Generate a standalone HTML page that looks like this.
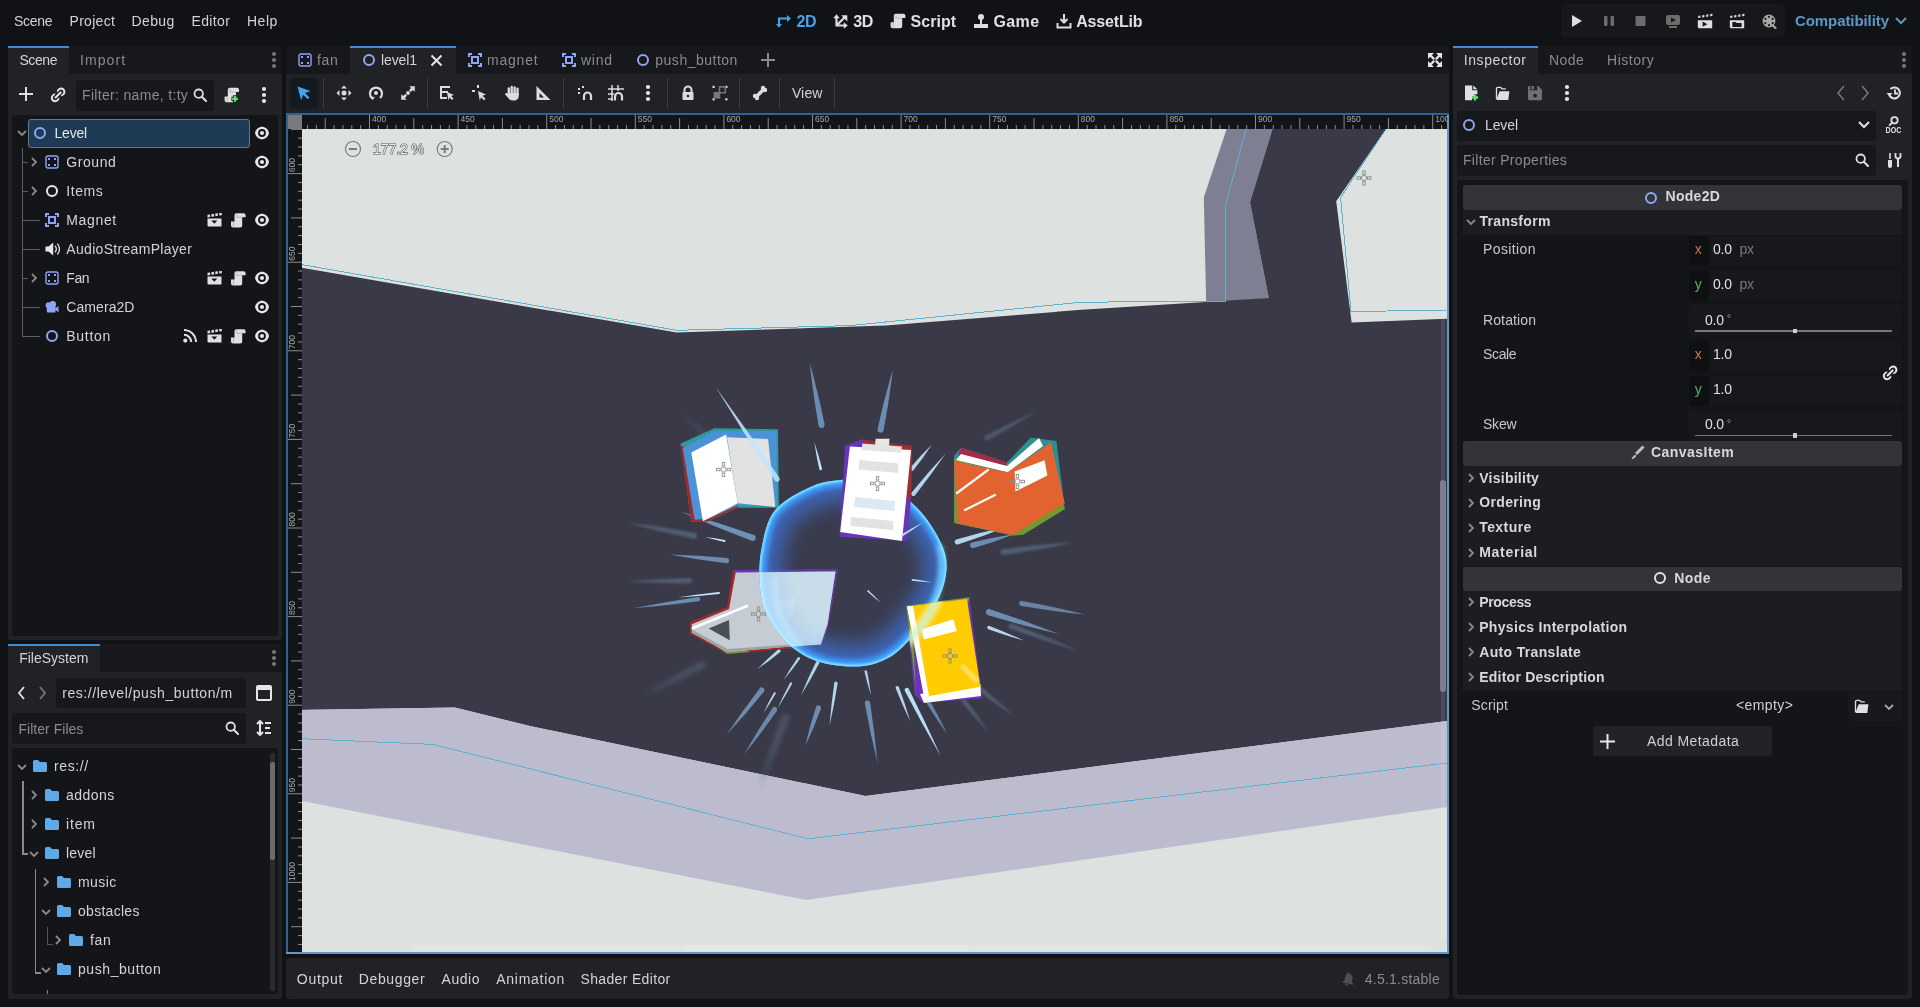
<!DOCTYPE html>
<html><head><meta charset="utf-8"><style>
html,body{margin:0;padding:0;width:1920px;height:1007px;overflow:hidden;background:#111215;font-family:"Liberation Sans", sans-serif;}
svg{display:block}
</style></head><body><div style="position:absolute;left:0;top:0;width:1920px;height:1007px;will-change:transform;">
<div style="position:absolute;left:14px;top:14.33px;font-size:14px;line-height:15.64px;font-weight:400;color:#d4d4d6;letter-spacing:-0.273px;white-space:pre;">Scene</div>
<div style="position:absolute;left:69.5px;top:14.33px;font-size:14px;line-height:15.64px;font-weight:400;color:#d4d4d6;letter-spacing:0.300px;white-space:pre;">Project</div>
<div style="position:absolute;left:131.5px;top:14.33px;font-size:14px;line-height:15.64px;font-weight:400;color:#d4d4d6;letter-spacing:0.394px;white-space:pre;">Debug</div>
<div style="position:absolute;left:191.5px;top:14.33px;font-size:14px;line-height:15.64px;font-weight:400;color:#d4d4d6;letter-spacing:0.356px;white-space:pre;">Editor</div>
<div style="position:absolute;left:247px;top:14.33px;font-size:14px;line-height:15.64px;font-weight:400;color:#d4d4d6;letter-spacing:0.501px;white-space:pre;">Help</div>
<svg style="position:absolute;left:776px;top:13px;" width="16" height="16" viewBox="0 0 16 16"><path d="M3 14V5.5h9" fill="none" stroke="#42a3f2" stroke-width="2"/><path d="M11 2l4 3.5-4 3.5z" fill="#42a3f2"/><path d="M0 11l3 3.5 3-3.5z" fill="#42a3f2"/></svg>
<div style="position:absolute;left:796.6px;top:12.52px;font-size:16px;line-height:17.87px;font-weight:700;color:#42a3f2;letter-spacing:-0.467px;white-space:pre;">2D</div>
<svg style="position:absolute;left:833px;top:13px;" width="16" height="16" viewBox="0 0 16 16"><path d="M3.5 4.5V12.5H11.5M3.5 12.5L11.5 4.5" fill="none" stroke="#dedede" stroke-width="2.2"/><path d="M0.2 5.2L3.5 1.2 6.8 5.2z" fill="#dedede"/><path d="M10.8 9.2L14.8 12.5 10.8 15.8z" fill="#dedede"/><path d="M8.2 2.3H14.3V8.4z" fill="#dedede"/></svg>
<div style="position:absolute;left:853.3px;top:12.52px;font-size:16px;line-height:17.87px;font-weight:700;color:#e0e0e0;letter-spacing:-0.467px;white-space:pre;">3D</div>
<svg style="position:absolute;left:890px;top:13px;" width="16" height="16" viewBox="0 0 16 16"><path d="M5.8 0.8H13.4A2 2 0 0 1 15.4 2.8V5H12.2V13.2A2 2 0 0 1 10.2 15.2H2.6A2 2 0 0 1 0.6 13.2V9.2H3.8V2.8A2 2 0 0 1 5.8 0.8Z" fill="#dedede"/><path d="M5.9 2.2V5H12" fill="none" stroke="#a8a8a8" stroke-width="0.8"/><path d="M3.2 9.8V14.4" stroke="#a8a8a8" stroke-width="0.8"/></svg>
<div style="position:absolute;left:910.6px;top:12.52px;font-size:16px;line-height:17.87px;font-weight:700;color:#e0e0e0;letter-spacing:0.010px;white-space:pre;">Script</div>
<svg style="position:absolute;left:973px;top:13px;" width="16" height="16" viewBox="0 0 16 16"><circle cx="8" cy="4" r="3" fill="#dedede"/><rect x="7" y="6" width="2" height="5" fill="#dedede"/><rect x="1" y="11" width="14" height="4" fill="#dedede"/></svg>
<div style="position:absolute;left:993.6px;top:12.52px;font-size:16px;line-height:17.87px;font-weight:700;color:#e0e0e0;letter-spacing:0.333px;white-space:pre;">Game</div>
<svg style="position:absolute;left:1056px;top:13px;" width="16" height="16" viewBox="0 0 16 16"><path d="M8 1v8M4.5 6l3.5 3.5L11.5 6M1.5 10v4.5h13V10" fill="none" stroke="#dedede" stroke-width="2"/></svg>
<div style="position:absolute;left:1076.2px;top:12.52px;font-size:16px;line-height:17.87px;font-weight:700;color:#e0e0e0;letter-spacing:-0.159px;white-space:pre;">AssetLib</div>
<div style="position:absolute;left:1561px;top:4px;width:224px;height:33px;background:#17181c;border-radius:4px;"></div>
<svg style="position:absolute;left:1568px;top:13px;" width="16" height="16" viewBox="0 0 16 16"><path d="M4 2l10 6-10 6z" fill="#dedede"/></svg>
<svg style="position:absolute;left:1601px;top:13px;" width="16" height="16" viewBox="0 0 16 16"><rect x="3" y="3" width="3.5" height="10" rx="1" fill="#6c6c6c"/><rect x="9.5" y="3" width="3.5" height="10" rx="1" fill="#6c6c6c"/></svg>
<svg style="position:absolute;left:1633px;top:13px;" width="16" height="16" viewBox="0 0 16 16"><rect x="2.5" y="3" width="10" height="10" rx="1" fill="#6c6c6c"/></svg>
<svg style="position:absolute;left:1665px;top:13px;" width="16" height="16" viewBox="0 0 16 16"><rect x="1" y="2" width="14" height="10" rx="2" fill="#6c6c6c"/><path d="M6 4.5l5 2.5-5 2.5z" fill="#17181c"/><rect x="4" y="13" width="8" height="2" fill="#6c6c6c"/></svg>
<svg style="position:absolute;left:1697px;top:13px;" width="16" height="16" viewBox="0 0 16 16"><path d="M1.2 2.9l2.2-0.35v2.2l-2.2 0.35zM5.2 2.3l2.2-0.35v2.2l-2.2 0.35zM9.2 1.7l2.2-0.35v2.2l-2.2 0.35zM13.2 1.1l2.2-0.35v2.2l-2.2 0.35z" fill="#dedede"/><path d="M0.8 7.2H15.2V15.2H2.3A1.5 1.5 0 0 1 0.8 13.7z" fill="#dedede"/><path d="M5.6 8.6L10.4 11.2L5.6 13.8z" fill="#17181c"/></svg>
<svg style="position:absolute;left:1729px;top:13px;" width="16" height="16" viewBox="0 0 16 16"><path d="M1.2 2.9l2.2-0.35v2.2l-2.2 0.35zM5.2 2.3l2.2-0.35v2.2l-2.2 0.35zM9.2 1.7l2.2-0.35v2.2l-2.2 0.35zM13.2 1.1l2.2-0.35v2.2l-2.2 0.35z" fill="#dedede"/><path d="M0.8 7.2H15.2V15.2H2.3A1.5 1.5 0 0 1 0.8 13.7z" fill="#dedede"/><path d="M3.4 8.9H6.6L7.6 9.9H12.6V13.9H3.4z" fill="#17181c"/></svg>
<svg style="position:absolute;left:1761px;top:13px;" width="16" height="16" viewBox="0 0 16 16"><circle cx="8" cy="8" r="6.4" fill="#a8a8a8"/><circle cx="8.00" cy="3.80" r="1.1" fill="#17181c"/><circle cx="11.64" cy="5.90" r="1.1" fill="#17181c"/><circle cx="11.64" cy="10.10" r="1.1" fill="#17181c"/><circle cx="8.00" cy="12.20" r="1.1" fill="#17181c"/><circle cx="4.36" cy="10.10" r="1.1" fill="#17181c"/><circle cx="4.36" cy="5.90" r="1.1" fill="#17181c"/><path d="M12 12.5L14.6 15.3" stroke="#a8a8a8" stroke-width="2" stroke-linecap="round"/></svg>
<div style="position:absolute;left:1795px;top:12.92px;font-size:15px;line-height:16.75px;font-weight:700;color:#5a98c4;letter-spacing:-0.082px;white-space:pre;">Compatibility</div>
<svg style="position:absolute;left:1894px;top:15px;" width="14" height="12" viewBox="0 0 14 12"><path d="M2 3l5 5 5-5" fill="none" stroke="#5a98c4" stroke-width="2"/></svg>
<div style="position:absolute;left:8px;top:46px;width:274px;height:594px;background:#17181c;border-radius:3px;"></div>
<div style="position:absolute;left:8px;top:74px;width:274px;height:566px;background:#212226;border-radius:0px;border-radius:0 0 3px 3px;"></div>
<div style="position:absolute;left:8px;top:46px;width:61px;height:28px;background:#212226;border-radius:0px;border-radius:3px 3px 0 0;"></div>
<div style="position:absolute;left:8px;top:46px;width:61px;height:2px;background:#3d8fd9;border-radius:0px;"></div>
<div style="position:absolute;left:19.4px;top:53.33px;font-size:14px;line-height:15.64px;font-weight:400;color:#d4d4d6;letter-spacing:-0.410px;white-space:pre;">Scene</div>
<div style="position:absolute;left:80px;top:53.33px;font-size:14px;line-height:15.64px;font-weight:400;color:#8b8b8f;letter-spacing:1.076px;white-space:pre;">Import</div>
<svg style="position:absolute;left:271px;top:51px;" width="6" height="18" viewBox="0 0 6 18"><circle cx="3" cy="3" r="2.1" fill="#777"/><circle cx="3" cy="9" r="2.1" fill="#777"/><circle cx="3" cy="15" r="2.1" fill="#777"/></svg>
<svg style="position:absolute;left:19px;top:87px;" width="14" height="14" viewBox="0 0 14 14"><path d="M7 0v14M0 7h14" stroke="#dedede" stroke-width="2"/></svg>
<svg style="position:absolute;left:46px;top:84px;" width="22" height="20" viewBox="0 0 22 20"><path d="M12.39 13.61A3.3 3.3 0 1 1 9.39 10.61M11.81 8.19A3.3 3.3 0 1 1 14.81 11.19" fill="none" stroke="#e6e6e6" stroke-width="2"/><path d="M9.6 13.4L14.6 8.4" stroke="#212226" stroke-width="4.6" stroke-linecap="round"/><path d="M9.6 13.4L14.6 8.4" stroke="#e6e6e6" stroke-width="2.1" stroke-linecap="round"/></svg>
<div style="position:absolute;left:76px;top:80px;width:137.5px;height:30.5px;background:#17181b;border-radius:3px;"></div>
<div style="position:absolute;left:82px;top:88.33px;font-size:14px;line-height:15.64px;font-weight:400;color:#8b8b8f;letter-spacing:0.324px;white-space:pre;">Filter: name, t:ty</div>
<svg style="position:absolute;left:193px;top:88px;" width="15" height="15" viewBox="0 0 15 15"><circle cx="5.7" cy="5.7" r="4.2" fill="none" stroke="#dedede" stroke-width="1.8"/><path d="M8.8 8.8L13 13" stroke="#dedede" stroke-width="2.1" stroke-linecap="round"/></svg>
<svg style="position:absolute;left:224px;top:87px;" width="16" height="16" viewBox="0 0 16 16"><path d="M5.8 0.8H13A2 2 0 0 1 15 2.8V5H12V13.2A2 2 0 0 1 10 15.2H2.6A2 2 0 0 1 0.6 13.2V9.6H3.8V2.8A2 2 0 0 1 5.8 0.8Z" fill="#e0e0e0"/><path d="M5.9 2.2V5H12" fill="none" stroke="#a8a8a8" stroke-width="0.8"/><path d="M3.2 10.2V14.4" stroke="#a8a8a8" stroke-width="0.8"/><path d="M11 8.2v7.2M7.4 11.8h7.2" stroke="#212226" stroke-width="4.2"/><path d="M11 9v5.8M8.1 11.9h5.8" stroke="#5fe070" stroke-width="2.2"/></svg>
<svg style="position:absolute;left:261px;top:86px;" width="6" height="18" viewBox="0 0 6 18"><circle cx="3" cy="3" r="2.1" fill="#e6e6e6"/><circle cx="3" cy="9" r="2.1" fill="#e6e6e6"/><circle cx="3" cy="15" r="2.1" fill="#e6e6e6"/></svg>
<div style="position:absolute;left:12px;top:115px;width:266px;height:521px;background:#141518;border-radius:3px;"></div>
<div style="position:absolute;left:28px;top:119px;width:221.5px;height:28.5px;background:#1f3a55;border-radius:3px;box-sizing:border-box;border:1px solid #6d7684;"></div>
<div style="position:absolute;left:21.5px;top:148px;width:1px;height:188px;background:#5e5e62;border-radius:0px;"></div>
<svg style="position:absolute;left:17px;top:129px;" width="10" height="8" viewBox="0 0 10 8"><path d="M1 2l4 4 4-4" fill="none" stroke="#8a8a8a" stroke-width="1.8"/></svg>
<svg style="position:absolute;left:33px;top:126px;" width="14" height="14" viewBox="0 0 14 14"><circle cx="7" cy="7" r="5" fill="none" stroke="#8da5f3" stroke-width="2"/></svg>
<div style="position:absolute;left:54.5px;top:126.33px;font-size:14px;line-height:15.64px;font-weight:400;color:#e6e6e6;letter-spacing:-0.220px;white-space:pre;">Level</div>
<svg style="position:absolute;left:254px;top:126px;" width="16" height="14" viewBox="0 0 16 14"><path d="M1 7C2.8 -1.3 13.2 -1.3 15 7C13.2 15.3 2.8 15.3 1 7z" fill="#e6e6e6"/><circle cx="8" cy="7" r="3.9" fill="#141518"/><circle cx="8" cy="7" r="2.1" fill="#e6e6e6"/></svg>
<div style="position:absolute;left:22px;top:162px;width:6px;height:1px;background:#5e5e62;border-radius:0px;"></div>
<svg style="position:absolute;left:30px;top:157px;" width="8" height="10" viewBox="0 0 8 10"><path d="M2 1l4 4-4 4" fill="none" stroke="#8a8a8a" stroke-width="1.8"/></svg>
<svg style="position:absolute;left:45px;top:155px;" width="14" height="14" viewBox="0 0 14 14"><rect x="1" y="1" width="12" height="12" rx="2" fill="none" stroke="#8da5f3" stroke-width="1.4"/><rect x="3" y="3" width="2" height="2" fill="#8da5f3"/><rect x="9" y="3" width="2" height="2" fill="#8da5f3"/><rect x="3" y="9" width="2" height="2" fill="#8da5f3"/><rect x="9" y="9" width="2" height="2" fill="#8da5f3"/></svg>
<div style="position:absolute;left:66.3px;top:155.33px;font-size:14px;line-height:15.64px;font-weight:400;color:#d4d4d6;letter-spacing:0.555px;white-space:pre;">Ground</div>
<svg style="position:absolute;left:254px;top:155px;" width="16" height="14" viewBox="0 0 16 14"><path d="M1 7C2.8 -1.3 13.2 -1.3 15 7C13.2 15.3 2.8 15.3 1 7z" fill="#e6e6e6"/><circle cx="8" cy="7" r="3.9" fill="#141518"/><circle cx="8" cy="7" r="2.1" fill="#e6e6e6"/></svg>
<div style="position:absolute;left:22px;top:191px;width:6px;height:1px;background:#5e5e62;border-radius:0px;"></div>
<svg style="position:absolute;left:30px;top:186px;" width="8" height="10" viewBox="0 0 8 10"><path d="M2 1l4 4-4 4" fill="none" stroke="#8a8a8a" stroke-width="1.8"/></svg>
<svg style="position:absolute;left:45px;top:184px;" width="14" height="14" viewBox="0 0 14 14"><circle cx="7" cy="7" r="5" fill="none" stroke="#e6e6e6" stroke-width="2"/></svg>
<div style="position:absolute;left:66.3px;top:184.33px;font-size:14px;line-height:15.64px;font-weight:400;color:#d4d4d6;letter-spacing:0.560px;white-space:pre;">Items</div>
<div style="position:absolute;left:22px;top:220px;width:18px;height:1px;background:#5e5e62;border-radius:0px;"></div>
<svg style="position:absolute;left:45px;top:213px;" width="14" height="14" viewBox="0 0 14 14"><path d="M1 4V1h3M10 1h3v3M13 10v3h-3M4 13H1v-3" fill="none" stroke="#8da5f3" stroke-width="2"/><rect x="4" y="4" width="6" height="6" fill="none" stroke="#8da5f3" stroke-width="2"/></svg>
<div style="position:absolute;left:66.3px;top:213.33px;font-size:14px;line-height:15.64px;font-weight:400;color:#d4d4d6;letter-spacing:0.648px;white-space:pre;">Magnet</div>
<svg style="position:absolute;left:207px;top:213px;" width="15" height="14" viewBox="0 0 15 14"><path d="M0.5 1.8l2.6-0.4v2.6l-2.6 0.4zM4.4 1.2l2.6-0.4v2.6l-2.6 0.4zM8.3 0.6l2.6-0.4v2.6l-2.6 0.4zM12.2 0l2.6-0.4v2.6l-2.6 0.4z" fill="#e0e0e0"/><path d="M0.5 5.5h14v8h-13a1 1 0 0 1-1-1z" fill="#e0e0e0"/><path d="M4.3 7.6h6L7.3 10.8z" fill="#141518"/></svg>
<svg style="position:absolute;left:231px;top:213px;" width="15" height="15" viewBox="0 0 15 15"><path d="M5.6 0.2H12.6A2 2 0 0 1 14.6 2.2V4.3H11.2V12.4A2 2 0 0 1 9.2 14.4H2A2 2 0 0 1 0 12.4V8.6H3.5V2.3A2 2 0 0 1 5.6 0.2Z" fill="#e0e0e0"/><path d="M5.7 1.5V4.3H11" fill="none" stroke="#a8a8a8" stroke-width="0.8"/><path d="M2.5 9.2V13.6" stroke="#a8a8a8" stroke-width="0.8"/></svg>
<svg style="position:absolute;left:254px;top:213px;" width="16" height="14" viewBox="0 0 16 14"><path d="M1 7C2.8 -1.3 13.2 -1.3 15 7C13.2 15.3 2.8 15.3 1 7z" fill="#e6e6e6"/><circle cx="8" cy="7" r="3.9" fill="#141518"/><circle cx="8" cy="7" r="2.1" fill="#e6e6e6"/></svg>
<div style="position:absolute;left:22px;top:249px;width:18px;height:1px;background:#5e5e62;border-radius:0px;"></div>
<svg style="position:absolute;left:45px;top:242px;" width="15" height="14" viewBox="0 0 15 14"><path d="M0.5 4.5h3l4.7-4v13l-4.7-4h-3z" fill="#e6e6e6"/><path d="M10 3.8a4.5 4.5 0 0 1 0 6.4M12.2 1.6a7.6 7.6 0 0 1 0 10.8" fill="none" stroke="#e6e6e6" stroke-width="1.3"/></svg>
<div style="position:absolute;left:66.3px;top:242.33px;font-size:14px;line-height:15.64px;font-weight:400;color:#d4d4d6;letter-spacing:0.309px;white-space:pre;">AudioStreamPlayer</div>
<div style="position:absolute;left:22px;top:278px;width:6px;height:1px;background:#5e5e62;border-radius:0px;"></div>
<svg style="position:absolute;left:30px;top:273px;" width="8" height="10" viewBox="0 0 8 10"><path d="M2 1l4 4-4 4" fill="none" stroke="#8a8a8a" stroke-width="1.8"/></svg>
<svg style="position:absolute;left:45px;top:271px;" width="14" height="14" viewBox="0 0 14 14"><rect x="1" y="1" width="12" height="12" rx="2" fill="none" stroke="#8da5f3" stroke-width="1.4"/><rect x="3" y="3" width="2" height="2" fill="#8da5f3"/><rect x="9" y="3" width="2" height="2" fill="#8da5f3"/><rect x="3" y="9" width="2" height="2" fill="#8da5f3"/><rect x="9" y="9" width="2" height="2" fill="#8da5f3"/></svg>
<div style="position:absolute;left:66.3px;top:271.33px;font-size:14px;line-height:15.64px;font-weight:400;color:#d4d4d6;letter-spacing:-0.385px;white-space:pre;">Fan</div>
<svg style="position:absolute;left:207px;top:271px;" width="15" height="14" viewBox="0 0 15 14"><path d="M0.5 1.8l2.6-0.4v2.6l-2.6 0.4zM4.4 1.2l2.6-0.4v2.6l-2.6 0.4zM8.3 0.6l2.6-0.4v2.6l-2.6 0.4zM12.2 0l2.6-0.4v2.6l-2.6 0.4z" fill="#e0e0e0"/><path d="M0.5 5.5h14v8h-13a1 1 0 0 1-1-1z" fill="#e0e0e0"/><path d="M4.3 7.6h6L7.3 10.8z" fill="#141518"/></svg>
<svg style="position:absolute;left:231px;top:271px;" width="15" height="15" viewBox="0 0 15 15"><path d="M5.6 0.2H12.6A2 2 0 0 1 14.6 2.2V4.3H11.2V12.4A2 2 0 0 1 9.2 14.4H2A2 2 0 0 1 0 12.4V8.6H3.5V2.3A2 2 0 0 1 5.6 0.2Z" fill="#e0e0e0"/><path d="M5.7 1.5V4.3H11" fill="none" stroke="#a8a8a8" stroke-width="0.8"/><path d="M2.5 9.2V13.6" stroke="#a8a8a8" stroke-width="0.8"/></svg>
<svg style="position:absolute;left:254px;top:271px;" width="16" height="14" viewBox="0 0 16 14"><path d="M1 7C2.8 -1.3 13.2 -1.3 15 7C13.2 15.3 2.8 15.3 1 7z" fill="#e6e6e6"/><circle cx="8" cy="7" r="3.9" fill="#141518"/><circle cx="8" cy="7" r="2.1" fill="#e6e6e6"/></svg>
<div style="position:absolute;left:22px;top:307px;width:18px;height:1px;background:#5e5e62;border-radius:0px;"></div>
<svg style="position:absolute;left:45px;top:301px;" width="14" height="12" viewBox="0 0 14 12"><circle cx="3.6" cy="4.2" r="3" fill="#8da5f3"/><circle cx="7.8" cy="3.3" r="3.2" fill="#8da5f3"/><path d="M1.8 5h8.7v6.5H3a1.2 1.2 0 0 1-1.2-1.2z" fill="#8da5f3"/><path d="M9.5 8l4-3v6.6z" fill="#8da5f3"/></svg>
<div style="position:absolute;left:66.3px;top:300.33px;font-size:14px;line-height:15.64px;font-weight:400;color:#d4d4d6;letter-spacing:0.067px;white-space:pre;">Camera2D</div>
<svg style="position:absolute;left:254px;top:300px;" width="16" height="14" viewBox="0 0 16 14"><path d="M1 7C2.8 -1.3 13.2 -1.3 15 7C13.2 15.3 2.8 15.3 1 7z" fill="#e6e6e6"/><circle cx="8" cy="7" r="3.9" fill="#141518"/><circle cx="8" cy="7" r="2.1" fill="#e6e6e6"/></svg>
<div style="position:absolute;left:22px;top:336px;width:18px;height:1px;background:#5e5e62;border-radius:0px;"></div>
<svg style="position:absolute;left:45px;top:329px;" width="14" height="14" viewBox="0 0 14 14"><circle cx="7" cy="7" r="5" fill="none" stroke="#8da5f3" stroke-width="2"/></svg>
<div style="position:absolute;left:66.3px;top:329.33px;font-size:14px;line-height:15.64px;font-weight:400;color:#d4d4d6;letter-spacing:0.707px;white-space:pre;">Button</div>
<svg style="position:absolute;left:182.5px;top:329px;" width="14" height="14" viewBox="0 0 14 14"><circle cx="2.3" cy="11.6" r="2.1" fill="#e0e0e0"/><path d="M1 5.8a7.2 7.2 0 0 1 7.2 7.2M1 1a12 12 0 0 1 12 12" fill="none" stroke="#e0e0e0" stroke-width="2.1"/></svg>
<svg style="position:absolute;left:207px;top:329px;" width="15" height="14" viewBox="0 0 15 14"><path d="M0.5 1.8l2.6-0.4v2.6l-2.6 0.4zM4.4 1.2l2.6-0.4v2.6l-2.6 0.4zM8.3 0.6l2.6-0.4v2.6l-2.6 0.4zM12.2 0l2.6-0.4v2.6l-2.6 0.4z" fill="#e0e0e0"/><path d="M0.5 5.5h14v8h-13a1 1 0 0 1-1-1z" fill="#e0e0e0"/><path d="M4.3 7.6h6L7.3 10.8z" fill="#141518"/></svg>
<svg style="position:absolute;left:231px;top:329px;" width="15" height="15" viewBox="0 0 15 15"><path d="M5.6 0.2H12.6A2 2 0 0 1 14.6 2.2V4.3H11.2V12.4A2 2 0 0 1 9.2 14.4H2A2 2 0 0 1 0 12.4V8.6H3.5V2.3A2 2 0 0 1 5.6 0.2Z" fill="#e0e0e0"/><path d="M5.7 1.5V4.3H11" fill="none" stroke="#a8a8a8" stroke-width="0.8"/><path d="M2.5 9.2V13.6" stroke="#a8a8a8" stroke-width="0.8"/></svg>
<svg style="position:absolute;left:254px;top:329px;" width="16" height="14" viewBox="0 0 16 14"><path d="M1 7C2.8 -1.3 13.2 -1.3 15 7C13.2 15.3 2.8 15.3 1 7z" fill="#e6e6e6"/><circle cx="8" cy="7" r="3.9" fill="#141518"/><circle cx="8" cy="7" r="2.1" fill="#e6e6e6"/></svg>
<div style="position:absolute;left:8px;top:644px;width:274px;height:354.5px;background:#212226;border-radius:3px;"></div>
<div style="position:absolute;left:100px;top:644px;width:182px;height:28px;background:#17181c;border-radius:0px;border-radius:0 3px 0 0;"></div>
<div style="position:absolute;left:8px;top:644px;width:92px;height:2px;background:#3d8fd9;border-radius:0px;"></div>
<div style="position:absolute;left:19.2px;top:651.33px;font-size:14px;line-height:15.64px;font-weight:400;color:#d4d4d6;letter-spacing:-0.004px;white-space:pre;">FileSystem</div>
<svg style="position:absolute;left:271px;top:649px;" width="6" height="18" viewBox="0 0 6 18"><circle cx="3" cy="3" r="2.1" fill="#777"/><circle cx="3" cy="9" r="2.1" fill="#777"/><circle cx="3" cy="15" r="2.1" fill="#777"/></svg>
<svg style="position:absolute;left:17px;top:686px;" width="10" height="14" viewBox="0 0 10 14"><path d="M7 1L2 7l5 6" fill="none" stroke="#e6e6e6" stroke-width="1.8"/></svg>
<svg style="position:absolute;left:37px;top:686px;" width="10" height="14" viewBox="0 0 10 14"><path d="M3 1l5 6-5 6" fill="none" stroke="#777" stroke-width="1.8"/></svg>
<div style="position:absolute;left:55.7px;top:678.4px;width:190.2px;height:30px;background:#17181b;border-radius:3px;"></div>
<div style="position:absolute;left:62.2px;top:686.33px;font-size:14px;line-height:15.64px;font-weight:400;color:#d4d4d6;letter-spacing:0.565px;white-space:pre;">res://level/push_button/m</div>
<svg style="position:absolute;left:256px;top:685px;" width="16" height="16" viewBox="0 0 16 16"><rect x="1" y="1" width="14" height="14" rx="1" fill="none" stroke="#e6e6e6" stroke-width="2"/><rect x="1" y="1" width="14" height="4" fill="#e6e6e6"/></svg>
<div style="position:absolute;left:12.3px;top:713.4px;width:233.6px;height:30.3px;background:#17181b;border-radius:3px;"></div>
<div style="position:absolute;left:18.4px;top:721.63px;font-size:14px;line-height:15.64px;font-weight:400;color:#8b8b8f;letter-spacing:0.038px;white-space:pre;">Filter Files</div>
<svg style="position:absolute;left:225px;top:721px;" width="15" height="15" viewBox="0 0 15 15"><circle cx="5.7" cy="5.7" r="4.2" fill="none" stroke="#dedede" stroke-width="1.8"/><path d="M8.8 8.8L13 13" stroke="#dedede" stroke-width="2.1" stroke-linecap="round"/></svg>
<svg style="position:absolute;left:256px;top:720px;" width="16" height="16" viewBox="0 0 16 16"><path d="M4 1v14M1 4l3-3 3 3M1 12l3 3 3-3M9 3h6M9 8h5M9 13h6" fill="none" stroke="#e6e6e6" stroke-width="2"/></svg>
<div style="position:absolute;left:12.3px;top:748px;width:265.3px;height:245.5px;background:#141518;border-radius:3px;"></div>
<div style="position:absolute;left:270px;top:752.5px;width:4.5px;height:238px;background:#2a2b2f;border-radius:2px;"></div>
<div style="position:absolute;left:270px;top:762px;width:4.5px;height:98px;background:#6a6a6e;border-radius:2px;"></div>
<div style="position:absolute;left:22px;top:781px;width:1.5px;height:73px;background:#8a8a8c;border-radius:0px;"></div>
<div style="position:absolute;left:22px;top:853px;width:6px;height:1.5px;background:#8a8a8c;border-radius:0px;"></div>
<div style="position:absolute;left:34.5px;top:869px;width:1.5px;height:104px;background:#8a8a8c;border-radius:0px;"></div>
<div style="position:absolute;left:34.5px;top:972px;width:6px;height:1.5px;background:#8a8a8c;border-radius:0px;"></div>
<div style="position:absolute;left:46.5px;top:927px;width:1px;height:18px;background:#555;border-radius:0px;"></div>
<div style="position:absolute;left:46.5px;top:944px;width:6px;height:1px;background:#555;border-radius:0px;"></div>
<svg style="position:absolute;left:17px;top:763px;" width="10" height="8" viewBox="0 0 10 8"><path d="M1 2l4 4 4-4" fill="none" stroke="#8a8a8a" stroke-width="1.8"/></svg>
<svg style="position:absolute;left:33px;top:760px;" width="14" height="12" viewBox="0 0 14 12"><path d="M0 1.5a1.5 1.5 0 0 1 1.5-1.5h3.5l2 2h5.5a1.5 1.5 0 0 1 1.5 1.5v7a1.5 1.5 0 0 1-1.5 1.5h-11a1.5 1.5 0 0 1-1.5-1.5z" fill="#5fa9e6"/></svg>
<div style="position:absolute;left:54px;top:759.33px;font-size:14px;line-height:15.64px;font-weight:400;color:#d4d4d6;letter-spacing:0.606px;white-space:pre;">res://</div>
<svg style="position:absolute;left:30px;top:790px;" width="8" height="10" viewBox="0 0 8 10"><path d="M2 1l4 4-4 4" fill="none" stroke="#8a8a8a" stroke-width="1.8"/></svg>
<svg style="position:absolute;left:45px;top:789px;" width="14" height="12" viewBox="0 0 14 12"><path d="M0 1.5a1.5 1.5 0 0 1 1.5-1.5h3.5l2 2h5.5a1.5 1.5 0 0 1 1.5 1.5v7a1.5 1.5 0 0 1-1.5 1.5h-11a1.5 1.5 0 0 1-1.5-1.5z" fill="#5fa9e6"/></svg>
<div style="position:absolute;left:66px;top:788.33px;font-size:14px;line-height:15.64px;font-weight:400;color:#d4d4d6;letter-spacing:0.475px;white-space:pre;">addons</div>
<svg style="position:absolute;left:30px;top:819px;" width="8" height="10" viewBox="0 0 8 10"><path d="M2 1l4 4-4 4" fill="none" stroke="#8a8a8a" stroke-width="1.8"/></svg>
<svg style="position:absolute;left:45px;top:818px;" width="14" height="12" viewBox="0 0 14 12"><path d="M0 1.5a1.5 1.5 0 0 1 1.5-1.5h3.5l2 2h5.5a1.5 1.5 0 0 1 1.5 1.5v7a1.5 1.5 0 0 1-1.5 1.5h-11a1.5 1.5 0 0 1-1.5-1.5z" fill="#5fa9e6"/></svg>
<div style="position:absolute;left:66px;top:817.33px;font-size:14px;line-height:15.64px;font-weight:400;color:#d4d4d6;letter-spacing:0.837px;white-space:pre;">item</div>
<svg style="position:absolute;left:29px;top:850px;" width="10" height="8" viewBox="0 0 10 8"><path d="M1 2l4 4 4-4" fill="none" stroke="#8a8a8a" stroke-width="1.8"/></svg>
<svg style="position:absolute;left:45px;top:847px;" width="14" height="12" viewBox="0 0 14 12"><path d="M0 1.5a1.5 1.5 0 0 1 1.5-1.5h3.5l2 2h5.5a1.5 1.5 0 0 1 1.5 1.5v7a1.5 1.5 0 0 1-1.5 1.5h-11a1.5 1.5 0 0 1-1.5-1.5z" fill="#5fa9e6"/></svg>
<div style="position:absolute;left:66px;top:846.33px;font-size:14px;line-height:15.64px;font-weight:400;color:#d4d4d6;letter-spacing:0.183px;white-space:pre;">level</div>
<svg style="position:absolute;left:42px;top:877px;" width="8" height="10" viewBox="0 0 8 10"><path d="M2 1l4 4-4 4" fill="none" stroke="#8a8a8a" stroke-width="1.8"/></svg>
<svg style="position:absolute;left:57px;top:876px;" width="14" height="12" viewBox="0 0 14 12"><path d="M0 1.5a1.5 1.5 0 0 1 1.5-1.5h3.5l2 2h5.5a1.5 1.5 0 0 1 1.5 1.5v7a1.5 1.5 0 0 1-1.5 1.5h-11a1.5 1.5 0 0 1-1.5-1.5z" fill="#5fa9e6"/></svg>
<div style="position:absolute;left:78px;top:875.33px;font-size:14px;line-height:15.64px;font-weight:400;color:#d4d4d6;letter-spacing:0.418px;white-space:pre;">music</div>
<svg style="position:absolute;left:41px;top:908px;" width="10" height="8" viewBox="0 0 10 8"><path d="M1 2l4 4 4-4" fill="none" stroke="#8a8a8a" stroke-width="1.8"/></svg>
<svg style="position:absolute;left:57px;top:905px;" width="14" height="12" viewBox="0 0 14 12"><path d="M0 1.5a1.5 1.5 0 0 1 1.5-1.5h3.5l2 2h5.5a1.5 1.5 0 0 1 1.5 1.5v7a1.5 1.5 0 0 1-1.5 1.5h-11a1.5 1.5 0 0 1-1.5-1.5z" fill="#5fa9e6"/></svg>
<div style="position:absolute;left:78px;top:904.33px;font-size:14px;line-height:15.64px;font-weight:400;color:#d4d4d6;letter-spacing:0.279px;white-space:pre;">obstacles</div>
<svg style="position:absolute;left:54px;top:935px;" width="8" height="10" viewBox="0 0 8 10"><path d="M2 1l4 4-4 4" fill="none" stroke="#8a8a8a" stroke-width="1.8"/></svg>
<svg style="position:absolute;left:69px;top:934px;" width="14" height="12" viewBox="0 0 14 12"><path d="M0 1.5a1.5 1.5 0 0 1 1.5-1.5h3.5l2 2h5.5a1.5 1.5 0 0 1 1.5 1.5v7a1.5 1.5 0 0 1-1.5 1.5h-11a1.5 1.5 0 0 1-1.5-1.5z" fill="#5fa9e6"/></svg>
<div style="position:absolute;left:90px;top:933.33px;font-size:14px;line-height:15.64px;font-weight:400;color:#d4d4d6;letter-spacing:0.638px;white-space:pre;">fan</div>
<svg style="position:absolute;left:41px;top:966px;" width="10" height="8" viewBox="0 0 10 8"><path d="M1 2l4 4 4-4" fill="none" stroke="#8a8a8a" stroke-width="1.8"/></svg>
<svg style="position:absolute;left:57px;top:963px;" width="14" height="12" viewBox="0 0 14 12"><path d="M0 1.5a1.5 1.5 0 0 1 1.5-1.5h3.5l2 2h5.5a1.5 1.5 0 0 1 1.5 1.5v7a1.5 1.5 0 0 1-1.5 1.5h-11a1.5 1.5 0 0 1-1.5-1.5z" fill="#5fa9e6"/></svg>
<div style="position:absolute;left:78px;top:962.33px;font-size:14px;line-height:15.64px;font-weight:400;color:#d4d4d6;letter-spacing:0.569px;white-space:pre;">push_button</div>
<div style="position:absolute;left:46.5px;top:990px;width:1.5px;height:8px;background:#8a8a8c;border-radius:0px;"></div>
<div style="position:absolute;left:12px;top:994px;width:266px;height:4px;background:#212226;border-radius:0px;"></div>
<div style="position:absolute;left:286px;top:46px;width:1163px;height:28px;background:#17181c;border-radius:3px;border-radius:3px 3px 0 0;"></div>
<div style="position:absolute;left:350px;top:46px;width:106px;height:28px;background:#212226;border-radius:0px;"></div>
<div style="position:absolute;left:350px;top:46px;width:106px;height:2px;background:#3d8fd9;border-radius:0px;"></div>
<svg style="position:absolute;left:298px;top:53px;" width="14" height="14" viewBox="0 0 14 14"><rect x="1" y="1" width="12" height="12" rx="2" fill="none" stroke="#8da5f3" stroke-width="1.4"/><rect x="3" y="3" width="2" height="2" fill="#8da5f3"/><rect x="9" y="3" width="2" height="2" fill="#8da5f3"/><rect x="3" y="9" width="2" height="2" fill="#8da5f3"/><rect x="9" y="9" width="2" height="2" fill="#8da5f3"/></svg>
<div style="position:absolute;left:317px;top:53.33px;font-size:14px;line-height:15.64px;font-weight:400;color:#8b8b8f;letter-spacing:0.638px;white-space:pre;">fan</div>
<svg style="position:absolute;left:362px;top:53px;" width="14" height="14" viewBox="0 0 14 14"><circle cx="7" cy="7" r="5" fill="none" stroke="#8da5f3" stroke-width="2"/></svg>
<div style="position:absolute;left:381px;top:53.33px;font-size:14px;line-height:15.64px;font-weight:400;color:#d4d4d6;letter-spacing:-0.110px;white-space:pre;">level1</div>
<svg style="position:absolute;left:430px;top:54px;" width="13" height="13" viewBox="0 0 13 13"><path d="M1.5 1.5l10 10M11.5 1.5l-10 10" stroke="#e6e6e6" stroke-width="2"/></svg>
<svg style="position:absolute;left:468px;top:53px;" width="14" height="14" viewBox="0 0 14 14"><path d="M1 4V1h3M10 1h3v3M13 10v3h-3M4 13H1v-3" fill="none" stroke="#8da5f3" stroke-width="2"/><rect x="4" y="4" width="6" height="6" fill="none" stroke="#8da5f3" stroke-width="2"/></svg>
<div style="position:absolute;left:487px;top:53.33px;font-size:14px;line-height:15.64px;font-weight:400;color:#8b8b8f;letter-spacing:0.796px;white-space:pre;">magnet</div>
<svg style="position:absolute;left:562px;top:53px;" width="14" height="14" viewBox="0 0 14 14"><path d="M1 4V1h3M10 1h3v3M13 10v3h-3M4 13H1v-3" fill="none" stroke="#8da5f3" stroke-width="2"/><rect x="4" y="4" width="6" height="6" fill="none" stroke="#8da5f3" stroke-width="2"/></svg>
<div style="position:absolute;left:581px;top:53.33px;font-size:14px;line-height:15.64px;font-weight:400;color:#8b8b8f;letter-spacing:0.707px;white-space:pre;">wind</div>
<svg style="position:absolute;left:636px;top:53px;" width="14" height="14" viewBox="0 0 14 14"><circle cx="7" cy="7" r="5" fill="none" stroke="#8da5f3" stroke-width="2"/></svg>
<div style="position:absolute;left:655.3px;top:53.33px;font-size:14px;line-height:15.64px;font-weight:400;color:#8b8b8f;letter-spacing:0.502px;white-space:pre;">push_button</div>
<svg style="position:absolute;left:761px;top:53px;" width="14" height="14" viewBox="0 0 14 14"><path d="M7 0v14M0 7h14" stroke="#8a8a8a" stroke-width="2"/></svg>
<svg style="position:absolute;left:1428px;top:53px;" width="14" height="14" viewBox="0 0 14 14"><path d="M0 0h6L0 6zM14 0h-6L14 6zM0 14h6L0 8zM14 14h-6L14 8z" fill="#e6e6e6"/><path d="M2 2L5.6 5.6M12 2L8.4 5.6M2 12L5.6 8.4M12 12L8.4 8.4" stroke="#e6e6e6" stroke-width="2.3" stroke-linecap="round"/></svg>
<div style="position:absolute;left:286px;top:74px;width:1163px;height:39px;background:#212226;border-radius:0px;"></div>
<div style="position:absolute;left:290px;top:78px;width:28px;height:30.5px;background:#151a21;border-radius:3px;"></div>
<svg style="position:absolute;left:296px;top:85px;" width="16" height="16" viewBox="0 0 16 16"><path d="M1.5 1.5l13 4.5-5.5 2 4.5 4.5-1.8 1.8-4.5-4.5-2 5.5z" fill="#42a3f2"/></svg>
<div style="position:absolute;left:323.0px;top:78px;width:1px;height:30.5px;background:#3a3b40;border-radius:0px;"></div>
<div style="position:absolute;left:427.0px;top:78px;width:1px;height:30.5px;background:#3a3b40;border-radius:0px;"></div>
<div style="position:absolute;left:562.9px;top:78px;width:1px;height:30.5px;background:#3a3b40;border-radius:0px;"></div>
<div style="position:absolute;left:667.3px;top:78px;width:1px;height:30.5px;background:#3a3b40;border-radius:0px;"></div>
<div style="position:absolute;left:739.2px;top:78px;width:1px;height:30.5px;background:#3a3b40;border-radius:0px;"></div>
<div style="position:absolute;left:778.9px;top:78px;width:1px;height:30.5px;background:#3a3b40;border-radius:0px;"></div>
<div style="position:absolute;left:834.0px;top:78px;width:1px;height:30.5px;background:#3a3b40;border-radius:0px;"></div>
<svg style="position:absolute;left:336px;top:85px;" width="16" height="16" viewBox="0 0 16 16"><path d="M8 0.5l3 3H5zM8 15.5l3-3H5zM0.5 8l3-3v6zM15.5 8l-3-3v6z" fill="#dcdcdc"/><circle cx="8" cy="8" r="2.5" fill="#dcdcdc"/></svg>
<svg style="position:absolute;left:368px;top:85px;" width="16" height="16" viewBox="0 0 16 16"><path d="M4 13A6 6 0 1 1 12 13" fill="none" stroke="#dcdcdc" stroke-width="2.2"/><circle cx="8" cy="8" r="2" fill="#dcdcdc"/><path d="M1.5 11.5l3 3.5 2.5-3z" fill="#dcdcdc"/></svg>
<svg style="position:absolute;left:400px;top:85px;" width="16" height="16" viewBox="0 0 16 16"><path d="M9.2 1.2h5.6v5.6l-1.9-1.9-2.1 2.1-1.8-1.8 2.1-2.1z" fill="#dcdcdc"/><path d="M6.8 14.8H1.2V9.2l1.9 1.9 2.1-2.1 1.8 1.8-2.1 2.1z" fill="#dcdcdc"/><circle cx="8" cy="8" r="1.9" fill="#dcdcdc"/></svg>
<svg style="position:absolute;left:439px;top:85px;" width="16" height="16" viewBox="0 0 16 16"><path d="M1 1h10v2H3v3h6v2H3v4h5v2H1z" fill="#dcdcdc"/><path d="M8 7l7 3-3 1 2.5 2.5-1.5 1.5-2.5-2.5-1 3z" fill="#dcdcdc"/></svg>
<svg style="position:absolute;left:472px;top:85px;" width="16" height="16" viewBox="0 0 16 16"><path d="M6 0v3M0 6h3" stroke="#dcdcdc" stroke-width="2"/><path d="M6 6l8 3.5-3.5 1.2 3 3-1.5 1.5-3-3-1.2 3.5z" fill="#dcdcdc"/></svg>
<svg style="position:absolute;left:504px;top:85px;" width="16" height="16" viewBox="0 0 16 16"><rect x="3.6" y="2.2" width="2.4" height="8" rx="1.2" fill="#dcdcdc"/><rect x="6.5" y="0.8" width="2.4" height="9" rx="1.2" fill="#dcdcdc"/><rect x="9.4" y="1.2" width="2.4" height="9" rx="1.2" fill="#dcdcdc"/><rect x="12.3" y="2.6" width="2.4" height="8" rx="1.2" fill="#dcdcdc"/><path d="M3.6 8H14.7V11.2A4.3 4.3 0 0 1 10.4 15.5H8.3A4.5 4.5 0 0 1 4.8 13.8L1.2 9.6A1.2 1.2 0 0 1 3 8.2L3.6 8.9z" fill="#dcdcdc"/></svg>
<svg style="position:absolute;left:535px;top:85px;" width="16" height="16" viewBox="0 0 16 16"><path d="M1.5 1v14h14z" fill="#dcdcdc"/><path d="M4.5 8v4.5h4.5z" fill="#212226"/></svg>
<svg style="position:absolute;left:577px;top:85px;" width="16" height="16" viewBox="0 0 16 16"><rect x="1" y="3" width="2" height="2" fill="#dcdcdc"/><rect x="5" y="1" width="2" height="2" fill="#dcdcdc"/><rect x="1" y="7" width="2" height="2" fill="#dcdcdc"/><path d="M7 15V11a3.5 3.5 0 0 1 7 0v4" fill="none" stroke="#dcdcdc" stroke-width="2.2"/></svg>
<svg style="position:absolute;left:608px;top:85px;" width="16" height="16" viewBox="0 0 16 16"><path d="M4 0v16M0 4h16M0 9h6M10 0v6M0 14h5" stroke="#dcdcdc" stroke-width="1.5"/><path d="M7 15.5V11.5a3.5 3.5 0 0 1 7 0v4" fill="none" stroke="#dcdcdc" stroke-width="2.2"/></svg>
<svg style="position:absolute;left:645px;top:84px;" width="6" height="18" viewBox="0 0 6 18"><circle cx="3" cy="3" r="2.1" fill="#e6e6e6"/><circle cx="3" cy="9" r="2.1" fill="#e6e6e6"/><circle cx="3" cy="15" r="2.1" fill="#e6e6e6"/></svg>
<svg style="position:absolute;left:680px;top:85px;" width="16" height="16" viewBox="0 0 16 16"><path d="M4.5 7V5a3.5 3.5 0 0 1 7 0v2" fill="none" stroke="#dcdcdc" stroke-width="2"/><rect x="2.5" y="7" width="11" height="8" rx="1" fill="#dcdcdc"/><circle cx="8" cy="11" r="1.3" fill="#212226"/></svg>
<svg style="position:absolute;left:712px;top:85px;" width="16" height="16" viewBox="0 0 16 16"><rect x="0.5" y="0.8" width="2.2" height="2.2" fill="#dcdcdc"/><rect x="13.3" y="0.8" width="2.2" height="2.2" fill="#dcdcdc"/><rect x="0.5" y="13.2" width="2.2" height="2.2" fill="#dcdcdc"/><rect x="13.3" y="13.2" width="2.2" height="2.2" fill="#dcdcdc"/><path d="M7.5 7.8V1.9H13.3V7.8z" fill="none" stroke="#777" stroke-width="1.6"/><rect x="1.6" y="7" width="6.7" height="6.6" fill="#777"/></svg>
<svg style="position:absolute;left:752px;top:85px;" width="16" height="16" viewBox="0 0 16 16"><path d="M4 12L12 4" stroke="#dcdcdc" stroke-width="3.5"/><circle cx="3" cy="11" r="2.2" fill="#dcdcdc"/><circle cx="5" cy="13" r="2.2" fill="#dcdcdc"/><circle cx="11" cy="3" r="2.2" fill="#dcdcdc"/><circle cx="13" cy="5" r="2.2" fill="#dcdcdc"/></svg>
<div style="position:absolute;left:791.9px;top:86.33px;font-size:14px;line-height:15.64px;font-weight:400;color:#d4d4d6;letter-spacing:0.149px;white-space:pre;">View</div>
<div style="position:absolute;left:288px;top:115px;width:1159px;height:14px;background:#131417;border-radius:0px;"></div>
<div style="position:absolute;left:288px;top:129px;width:14px;height:822px;background:#131417;border-radius:0px;"></div>
<div style="position:absolute;left:288px;top:115px;width:14px;height:14px;background:#7a7a7a;border-radius:0px;"></div>
<svg style="position:absolute;left:288px;top:115px" width="1159" height="836" viewBox="288 115 1159 836"><rect x="306.98" y="125" width="1" height="4" fill="#8c8c8c"/><rect x="315.84" y="125" width="1" height="4" fill="#8c8c8c"/><rect x="324.70" y="118" width="1" height="11" fill="#8c8c8c"/><rect x="333.56" y="125" width="1" height="4" fill="#8c8c8c"/><rect x="342.42" y="125" width="1" height="4" fill="#8c8c8c"/><rect x="351.28" y="125" width="1" height="4" fill="#8c8c8c"/><rect x="360.14" y="125" width="1" height="4" fill="#8c8c8c"/><rect x="369.00" y="115" width="1" height="14" fill="#8c8c8c"/><text x="372.00" y="121.5" font-size="8.5" fill="#a8a8a8" font-family="Liberation Sans">400</text><rect x="377.86" y="125" width="1" height="4" fill="#8c8c8c"/><rect x="386.72" y="125" width="1" height="4" fill="#8c8c8c"/><rect x="395.58" y="125" width="1" height="4" fill="#8c8c8c"/><rect x="404.44" y="125" width="1" height="4" fill="#8c8c8c"/><rect x="413.30" y="118" width="1" height="11" fill="#8c8c8c"/><rect x="422.16" y="125" width="1" height="4" fill="#8c8c8c"/><rect x="431.02" y="125" width="1" height="4" fill="#8c8c8c"/><rect x="439.88" y="125" width="1" height="4" fill="#8c8c8c"/><rect x="448.74" y="125" width="1" height="4" fill="#8c8c8c"/><rect x="457.60" y="115" width="1" height="14" fill="#8c8c8c"/><text x="460.60" y="121.5" font-size="8.5" fill="#a8a8a8" font-family="Liberation Sans">450</text><rect x="466.46" y="125" width="1" height="4" fill="#8c8c8c"/><rect x="475.32" y="125" width="1" height="4" fill="#8c8c8c"/><rect x="484.18" y="125" width="1" height="4" fill="#8c8c8c"/><rect x="493.04" y="125" width="1" height="4" fill="#8c8c8c"/><rect x="501.90" y="118" width="1" height="11" fill="#8c8c8c"/><rect x="510.76" y="125" width="1" height="4" fill="#8c8c8c"/><rect x="519.62" y="125" width="1" height="4" fill="#8c8c8c"/><rect x="528.48" y="125" width="1" height="4" fill="#8c8c8c"/><rect x="537.34" y="125" width="1" height="4" fill="#8c8c8c"/><rect x="546.20" y="115" width="1" height="14" fill="#8c8c8c"/><text x="549.20" y="121.5" font-size="8.5" fill="#a8a8a8" font-family="Liberation Sans">500</text><rect x="555.06" y="125" width="1" height="4" fill="#8c8c8c"/><rect x="563.92" y="125" width="1" height="4" fill="#8c8c8c"/><rect x="572.78" y="125" width="1" height="4" fill="#8c8c8c"/><rect x="581.64" y="125" width="1" height="4" fill="#8c8c8c"/><rect x="590.50" y="118" width="1" height="11" fill="#8c8c8c"/><rect x="599.36" y="125" width="1" height="4" fill="#8c8c8c"/><rect x="608.22" y="125" width="1" height="4" fill="#8c8c8c"/><rect x="617.08" y="125" width="1" height="4" fill="#8c8c8c"/><rect x="625.94" y="125" width="1" height="4" fill="#8c8c8c"/><rect x="634.80" y="115" width="1" height="14" fill="#8c8c8c"/><text x="637.80" y="121.5" font-size="8.5" fill="#a8a8a8" font-family="Liberation Sans">550</text><rect x="643.66" y="125" width="1" height="4" fill="#8c8c8c"/><rect x="652.52" y="125" width="1" height="4" fill="#8c8c8c"/><rect x="661.38" y="125" width="1" height="4" fill="#8c8c8c"/><rect x="670.24" y="125" width="1" height="4" fill="#8c8c8c"/><rect x="679.10" y="118" width="1" height="11" fill="#8c8c8c"/><rect x="687.96" y="125" width="1" height="4" fill="#8c8c8c"/><rect x="696.82" y="125" width="1" height="4" fill="#8c8c8c"/><rect x="705.68" y="125" width="1" height="4" fill="#8c8c8c"/><rect x="714.54" y="125" width="1" height="4" fill="#8c8c8c"/><rect x="723.40" y="115" width="1" height="14" fill="#8c8c8c"/><text x="726.40" y="121.5" font-size="8.5" fill="#a8a8a8" font-family="Liberation Sans">600</text><rect x="732.26" y="125" width="1" height="4" fill="#8c8c8c"/><rect x="741.12" y="125" width="1" height="4" fill="#8c8c8c"/><rect x="749.98" y="125" width="1" height="4" fill="#8c8c8c"/><rect x="758.84" y="125" width="1" height="4" fill="#8c8c8c"/><rect x="767.70" y="118" width="1" height="11" fill="#8c8c8c"/><rect x="776.56" y="125" width="1" height="4" fill="#8c8c8c"/><rect x="785.42" y="125" width="1" height="4" fill="#8c8c8c"/><rect x="794.28" y="125" width="1" height="4" fill="#8c8c8c"/><rect x="803.14" y="125" width="1" height="4" fill="#8c8c8c"/><rect x="812.00" y="115" width="1" height="14" fill="#8c8c8c"/><text x="815.00" y="121.5" font-size="8.5" fill="#a8a8a8" font-family="Liberation Sans">650</text><rect x="820.86" y="125" width="1" height="4" fill="#8c8c8c"/><rect x="829.72" y="125" width="1" height="4" fill="#8c8c8c"/><rect x="838.58" y="125" width="1" height="4" fill="#8c8c8c"/><rect x="847.44" y="125" width="1" height="4" fill="#8c8c8c"/><rect x="856.30" y="118" width="1" height="11" fill="#8c8c8c"/><rect x="865.16" y="125" width="1" height="4" fill="#8c8c8c"/><rect x="874.02" y="125" width="1" height="4" fill="#8c8c8c"/><rect x="882.88" y="125" width="1" height="4" fill="#8c8c8c"/><rect x="891.74" y="125" width="1" height="4" fill="#8c8c8c"/><rect x="900.60" y="115" width="1" height="14" fill="#8c8c8c"/><text x="903.60" y="121.5" font-size="8.5" fill="#a8a8a8" font-family="Liberation Sans">700</text><rect x="909.46" y="125" width="1" height="4" fill="#8c8c8c"/><rect x="918.32" y="125" width="1" height="4" fill="#8c8c8c"/><rect x="927.18" y="125" width="1" height="4" fill="#8c8c8c"/><rect x="936.04" y="125" width="1" height="4" fill="#8c8c8c"/><rect x="944.90" y="118" width="1" height="11" fill="#8c8c8c"/><rect x="953.76" y="125" width="1" height="4" fill="#8c8c8c"/><rect x="962.62" y="125" width="1" height="4" fill="#8c8c8c"/><rect x="971.48" y="125" width="1" height="4" fill="#8c8c8c"/><rect x="980.34" y="125" width="1" height="4" fill="#8c8c8c"/><rect x="989.20" y="115" width="1" height="14" fill="#8c8c8c"/><text x="992.20" y="121.5" font-size="8.5" fill="#a8a8a8" font-family="Liberation Sans">750</text><rect x="998.06" y="125" width="1" height="4" fill="#8c8c8c"/><rect x="1006.92" y="125" width="1" height="4" fill="#8c8c8c"/><rect x="1015.78" y="125" width="1" height="4" fill="#8c8c8c"/><rect x="1024.64" y="125" width="1" height="4" fill="#8c8c8c"/><rect x="1033.50" y="118" width="1" height="11" fill="#8c8c8c"/><rect x="1042.36" y="125" width="1" height="4" fill="#8c8c8c"/><rect x="1051.22" y="125" width="1" height="4" fill="#8c8c8c"/><rect x="1060.08" y="125" width="1" height="4" fill="#8c8c8c"/><rect x="1068.94" y="125" width="1" height="4" fill="#8c8c8c"/><rect x="1077.80" y="115" width="1" height="14" fill="#8c8c8c"/><text x="1080.80" y="121.5" font-size="8.5" fill="#a8a8a8" font-family="Liberation Sans">800</text><rect x="1086.66" y="125" width="1" height="4" fill="#8c8c8c"/><rect x="1095.52" y="125" width="1" height="4" fill="#8c8c8c"/><rect x="1104.38" y="125" width="1" height="4" fill="#8c8c8c"/><rect x="1113.24" y="125" width="1" height="4" fill="#8c8c8c"/><rect x="1122.10" y="118" width="1" height="11" fill="#8c8c8c"/><rect x="1130.96" y="125" width="1" height="4" fill="#8c8c8c"/><rect x="1139.82" y="125" width="1" height="4" fill="#8c8c8c"/><rect x="1148.68" y="125" width="1" height="4" fill="#8c8c8c"/><rect x="1157.54" y="125" width="1" height="4" fill="#8c8c8c"/><rect x="1166.40" y="115" width="1" height="14" fill="#8c8c8c"/><text x="1169.40" y="121.5" font-size="8.5" fill="#a8a8a8" font-family="Liberation Sans">850</text><rect x="1175.26" y="125" width="1" height="4" fill="#8c8c8c"/><rect x="1184.12" y="125" width="1" height="4" fill="#8c8c8c"/><rect x="1192.98" y="125" width="1" height="4" fill="#8c8c8c"/><rect x="1201.84" y="125" width="1" height="4" fill="#8c8c8c"/><rect x="1210.70" y="118" width="1" height="11" fill="#8c8c8c"/><rect x="1219.56" y="125" width="1" height="4" fill="#8c8c8c"/><rect x="1228.42" y="125" width="1" height="4" fill="#8c8c8c"/><rect x="1237.28" y="125" width="1" height="4" fill="#8c8c8c"/><rect x="1246.14" y="125" width="1" height="4" fill="#8c8c8c"/><rect x="1255.00" y="115" width="1" height="14" fill="#8c8c8c"/><text x="1258.00" y="121.5" font-size="8.5" fill="#a8a8a8" font-family="Liberation Sans">900</text><rect x="1263.86" y="125" width="1" height="4" fill="#8c8c8c"/><rect x="1272.72" y="125" width="1" height="4" fill="#8c8c8c"/><rect x="1281.58" y="125" width="1" height="4" fill="#8c8c8c"/><rect x="1290.44" y="125" width="1" height="4" fill="#8c8c8c"/><rect x="1299.30" y="118" width="1" height="11" fill="#8c8c8c"/><rect x="1308.16" y="125" width="1" height="4" fill="#8c8c8c"/><rect x="1317.02" y="125" width="1" height="4" fill="#8c8c8c"/><rect x="1325.88" y="125" width="1" height="4" fill="#8c8c8c"/><rect x="1334.74" y="125" width="1" height="4" fill="#8c8c8c"/><rect x="1343.60" y="115" width="1" height="14" fill="#8c8c8c"/><text x="1346.60" y="121.5" font-size="8.5" fill="#a8a8a8" font-family="Liberation Sans">950</text><rect x="1352.46" y="125" width="1" height="4" fill="#8c8c8c"/><rect x="1361.32" y="125" width="1" height="4" fill="#8c8c8c"/><rect x="1370.18" y="125" width="1" height="4" fill="#8c8c8c"/><rect x="1379.04" y="125" width="1" height="4" fill="#8c8c8c"/><rect x="1387.90" y="118" width="1" height="11" fill="#8c8c8c"/><rect x="1396.76" y="125" width="1" height="4" fill="#8c8c8c"/><rect x="1405.62" y="125" width="1" height="4" fill="#8c8c8c"/><rect x="1414.48" y="125" width="1" height="4" fill="#8c8c8c"/><rect x="1423.34" y="125" width="1" height="4" fill="#8c8c8c"/><rect x="1432.20" y="115" width="1" height="14" fill="#8c8c8c"/><text x="1435.20" y="121.5" font-size="8.5" fill="#a8a8a8" font-family="Liberation Sans">1000</text><rect x="1441.06" y="125" width="1" height="4" fill="#8c8c8c"/><rect x="291" y="128.80" width="11" height="1" fill="#8c8c8c"/><rect x="298" y="137.66" width="4" height="1" fill="#8c8c8c"/><rect x="298" y="146.52" width="4" height="1" fill="#8c8c8c"/><rect x="298" y="155.38" width="4" height="1" fill="#8c8c8c"/><rect x="298" y="164.24" width="4" height="1" fill="#8c8c8c"/><rect x="288" y="173.10" width="14" height="1" fill="#8c8c8c"/><text x="0" y="0" font-size="8.5" fill="#a8a8a8" font-family="Liberation Sans" transform="translate(294.5 172.10) rotate(-90)">600</text><rect x="298" y="181.96" width="4" height="1" fill="#8c8c8c"/><rect x="298" y="190.82" width="4" height="1" fill="#8c8c8c"/><rect x="298" y="199.68" width="4" height="1" fill="#8c8c8c"/><rect x="298" y="208.54" width="4" height="1" fill="#8c8c8c"/><rect x="291" y="217.40" width="11" height="1" fill="#8c8c8c"/><rect x="298" y="226.26" width="4" height="1" fill="#8c8c8c"/><rect x="298" y="235.12" width="4" height="1" fill="#8c8c8c"/><rect x="298" y="243.98" width="4" height="1" fill="#8c8c8c"/><rect x="298" y="252.84" width="4" height="1" fill="#8c8c8c"/><rect x="288" y="261.70" width="14" height="1" fill="#8c8c8c"/><text x="0" y="0" font-size="8.5" fill="#a8a8a8" font-family="Liberation Sans" transform="translate(294.5 260.70) rotate(-90)">650</text><rect x="298" y="270.56" width="4" height="1" fill="#8c8c8c"/><rect x="298" y="279.42" width="4" height="1" fill="#8c8c8c"/><rect x="298" y="288.28" width="4" height="1" fill="#8c8c8c"/><rect x="298" y="297.14" width="4" height="1" fill="#8c8c8c"/><rect x="291" y="306.00" width="11" height="1" fill="#8c8c8c"/><rect x="298" y="314.86" width="4" height="1" fill="#8c8c8c"/><rect x="298" y="323.72" width="4" height="1" fill="#8c8c8c"/><rect x="298" y="332.58" width="4" height="1" fill="#8c8c8c"/><rect x="298" y="341.44" width="4" height="1" fill="#8c8c8c"/><rect x="288" y="350.30" width="14" height="1" fill="#8c8c8c"/><text x="0" y="0" font-size="8.5" fill="#a8a8a8" font-family="Liberation Sans" transform="translate(294.5 349.30) rotate(-90)">700</text><rect x="298" y="359.16" width="4" height="1" fill="#8c8c8c"/><rect x="298" y="368.02" width="4" height="1" fill="#8c8c8c"/><rect x="298" y="376.88" width="4" height="1" fill="#8c8c8c"/><rect x="298" y="385.74" width="4" height="1" fill="#8c8c8c"/><rect x="291" y="394.60" width="11" height="1" fill="#8c8c8c"/><rect x="298" y="403.46" width="4" height="1" fill="#8c8c8c"/><rect x="298" y="412.32" width="4" height="1" fill="#8c8c8c"/><rect x="298" y="421.18" width="4" height="1" fill="#8c8c8c"/><rect x="298" y="430.04" width="4" height="1" fill="#8c8c8c"/><rect x="288" y="438.90" width="14" height="1" fill="#8c8c8c"/><text x="0" y="0" font-size="8.5" fill="#a8a8a8" font-family="Liberation Sans" transform="translate(294.5 437.90) rotate(-90)">750</text><rect x="298" y="447.76" width="4" height="1" fill="#8c8c8c"/><rect x="298" y="456.62" width="4" height="1" fill="#8c8c8c"/><rect x="298" y="465.48" width="4" height="1" fill="#8c8c8c"/><rect x="298" y="474.34" width="4" height="1" fill="#8c8c8c"/><rect x="291" y="483.20" width="11" height="1" fill="#8c8c8c"/><rect x="298" y="492.06" width="4" height="1" fill="#8c8c8c"/><rect x="298" y="500.92" width="4" height="1" fill="#8c8c8c"/><rect x="298" y="509.78" width="4" height="1" fill="#8c8c8c"/><rect x="298" y="518.64" width="4" height="1" fill="#8c8c8c"/><rect x="288" y="527.50" width="14" height="1" fill="#8c8c8c"/><text x="0" y="0" font-size="8.5" fill="#a8a8a8" font-family="Liberation Sans" transform="translate(294.5 526.50) rotate(-90)">800</text><rect x="298" y="536.36" width="4" height="1" fill="#8c8c8c"/><rect x="298" y="545.22" width="4" height="1" fill="#8c8c8c"/><rect x="298" y="554.08" width="4" height="1" fill="#8c8c8c"/><rect x="298" y="562.94" width="4" height="1" fill="#8c8c8c"/><rect x="291" y="571.80" width="11" height="1" fill="#8c8c8c"/><rect x="298" y="580.66" width="4" height="1" fill="#8c8c8c"/><rect x="298" y="589.52" width="4" height="1" fill="#8c8c8c"/><rect x="298" y="598.38" width="4" height="1" fill="#8c8c8c"/><rect x="298" y="607.24" width="4" height="1" fill="#8c8c8c"/><rect x="288" y="616.10" width="14" height="1" fill="#8c8c8c"/><text x="0" y="0" font-size="8.5" fill="#a8a8a8" font-family="Liberation Sans" transform="translate(294.5 615.10) rotate(-90)">850</text><rect x="298" y="624.96" width="4" height="1" fill="#8c8c8c"/><rect x="298" y="633.82" width="4" height="1" fill="#8c8c8c"/><rect x="298" y="642.68" width="4" height="1" fill="#8c8c8c"/><rect x="298" y="651.54" width="4" height="1" fill="#8c8c8c"/><rect x="291" y="660.40" width="11" height="1" fill="#8c8c8c"/><rect x="298" y="669.26" width="4" height="1" fill="#8c8c8c"/><rect x="298" y="678.12" width="4" height="1" fill="#8c8c8c"/><rect x="298" y="686.98" width="4" height="1" fill="#8c8c8c"/><rect x="298" y="695.84" width="4" height="1" fill="#8c8c8c"/><rect x="288" y="704.70" width="14" height="1" fill="#8c8c8c"/><text x="0" y="0" font-size="8.5" fill="#a8a8a8" font-family="Liberation Sans" transform="translate(294.5 703.70) rotate(-90)">900</text><rect x="298" y="713.56" width="4" height="1" fill="#8c8c8c"/><rect x="298" y="722.42" width="4" height="1" fill="#8c8c8c"/><rect x="298" y="731.28" width="4" height="1" fill="#8c8c8c"/><rect x="298" y="740.14" width="4" height="1" fill="#8c8c8c"/><rect x="291" y="749.00" width="11" height="1" fill="#8c8c8c"/><rect x="298" y="757.86" width="4" height="1" fill="#8c8c8c"/><rect x="298" y="766.72" width="4" height="1" fill="#8c8c8c"/><rect x="298" y="775.58" width="4" height="1" fill="#8c8c8c"/><rect x="298" y="784.44" width="4" height="1" fill="#8c8c8c"/><rect x="288" y="793.30" width="14" height="1" fill="#8c8c8c"/><text x="0" y="0" font-size="8.5" fill="#a8a8a8" font-family="Liberation Sans" transform="translate(294.5 792.30) rotate(-90)">950</text><rect x="298" y="802.16" width="4" height="1" fill="#8c8c8c"/><rect x="298" y="811.02" width="4" height="1" fill="#8c8c8c"/><rect x="298" y="819.88" width="4" height="1" fill="#8c8c8c"/><rect x="298" y="828.74" width="4" height="1" fill="#8c8c8c"/><rect x="291" y="837.60" width="11" height="1" fill="#8c8c8c"/><rect x="298" y="846.46" width="4" height="1" fill="#8c8c8c"/><rect x="298" y="855.32" width="4" height="1" fill="#8c8c8c"/><rect x="298" y="864.18" width="4" height="1" fill="#8c8c8c"/><rect x="298" y="873.04" width="4" height="1" fill="#8c8c8c"/><rect x="288" y="881.90" width="14" height="1" fill="#8c8c8c"/><text x="0" y="0" font-size="8.5" fill="#a8a8a8" font-family="Liberation Sans" transform="translate(294.5 880.90) rotate(-90)">1000</text><rect x="298" y="890.76" width="4" height="1" fill="#8c8c8c"/><rect x="298" y="899.62" width="4" height="1" fill="#8c8c8c"/><rect x="298" y="908.48" width="4" height="1" fill="#8c8c8c"/><rect x="298" y="917.34" width="4" height="1" fill="#8c8c8c"/><rect x="291" y="926.20" width="11" height="1" fill="#8c8c8c"/><rect x="298" y="935.06" width="4" height="1" fill="#8c8c8c"/><rect x="298" y="943.92" width="4" height="1" fill="#8c8c8c"/></svg>
<svg style="position:absolute;left:302px;top:129px" width="1145" height="823" viewBox="302 129 1145 823"><rect x="302" y="129" width="1145" height="823" fill="#dde2e1"/><polygon points="1226.6,129.0 1203.8,197.5 1206.2,304.4 1268.8,298.0 1250.0,202.2 1272.5,129.0" fill="#7f7f94"/><polygon points="296.0,266.8 676.6,332.5 886.0,325.6 1078.0,310.0 1268.8,298.0 1250.0,202.2 1272.5,129.0 1385.9,129.0 1336.2,201.2 1351.6,322.5 1447.0,318.8 1447.0,721.0 865.6,796.0 529.8,726.0 454.8,707.5 296.0,710.1" fill="#3a3947"/><polygon points="296.0,710.1 454.8,707.5 529.8,726.0 865.6,796.0 1447.0,721.0 1447.0,806.9 806.3,900.0 296.0,799.8" fill="#bdbbce"/><polyline points="296.0,263.6 676.6,330.3 850.0,325.6 1081.0,302.2 1225.0,301.2 1225.0,206.9 1246.0,129.4" fill="none" stroke="#5db3cc" stroke-width="1" shape-rendering="crispEdges"/><polyline points="1385.9,129.4 1340.6,197.5 1351.0,311.6 1447.0,310.0" fill="none" stroke="#5db3cc" stroke-width="1" shape-rendering="crispEdges"/><polyline points="296.0,738.5 432.9,744.4 807.9,838.8 1447.0,763.0" fill="none" stroke="#5db3cc" stroke-width="1" shape-rendering="crispEdges"/><rect x="1441" y="135" width="4" height="805" rx="2" fill="rgba(255,255,255,0.09)"/><rect x="1440" y="480" width="6" height="212" rx="3" fill="#7e7d8a"/><rect x="412" y="945" width="1020" height="6" rx="3" fill="rgba(255,255,255,0.12)"/><rect x="686" y="945" width="283" height="6" rx="3" fill="#e6e9e9"/><circle cx="353" cy="149" r="7.5" fill="none" stroke="#7b7b7b" stroke-width="1.2"/><rect x="349" y="148" width="8" height="2" fill="#7b7b7b"/><circle cx="444.7" cy="149" r="7.5" fill="none" stroke="#7b7b7b" stroke-width="1.2"/><rect x="440.7" y="148" width="8" height="2" fill="#7b7b7b"/><rect x="443.7" y="145" width="2" height="8" fill="#7b7b7b"/><text x="373" y="154" font-size="14" font-family="Liberation Sans" fill="#ececec" stroke="#5a5a5a" stroke-width="1.2" paint-order="stroke" textLength="51">177.2 %</text><defs>
<radialGradient id="bub" cx="0.5" cy="0.52" r="0.5">
<stop offset="0" stop-color="#3a3947" stop-opacity="0"/>
<stop offset="0.5" stop-color="#3d4a66" stop-opacity="0.15"/>
<stop offset="0.78" stop-color="#4070c0" stop-opacity="0.45"/>
<stop offset="0.92" stop-color="#48a8f5" stop-opacity="0.85"/>
<stop offset="0.98" stop-color="#6fd8ff" stop-opacity="1"/>
<stop offset="1" stop-color="#6fd8ff" stop-opacity="0"/>
</radialGradient>
<filter id="bl0" x="-50%" y="-50%" width="200%" height="200%"><feGaussianBlur stdDeviation="0.5"/></filter>
<filter id="bl1" x="-50%" y="-50%" width="200%" height="200%"><feGaussianBlur stdDeviation="1.2"/></filter>
<filter id="bl2" x="-50%" y="-50%" width="200%" height="200%"><feGaussianBlur stdDeviation="2.5"/></filter>
<filter id="glow" x="-30%" y="-30%" width="160%" height="160%"><feGaussianBlur stdDeviation="3"/></filter>
</defs><path d="M809.8 363.1 Q813.0 394.7 818.6 425.7 A3.06 3.06 0 0 0 824.6 424.6 Q818.4 393.6 809.8 363.1 Z" fill="#7396bd" opacity="0.9" filter="url(#bl0)"/><path d="M814.2 441.8 Q816.3 455.6 819.4 469.2 A1.31 1.31 0 0 0 822.0 468.6 Q818.6 455.1 814.2 441.8 Z" fill="#bfe6ff" opacity="1" filter="url(#bl0)"/><path d="M892.8 369.7 Q884.0 399.1 877.6 428.9 A3.06 3.06 0 0 0 883.6 430.2 Q889.4 400.2 892.8 369.7 Z" fill="#7396bd" opacity="0.9" filter="url(#bl0)"/><path d="M678.7 411.2 Q709.6 441.7 742.2 470.3 A3.06 3.06 0 0 0 746.2 465.7 Q713.3 437.5 678.7 411.2 Z" fill="#55677f" opacity="0.6" filter="url(#bl2)"/><path d="M626.2 522.6 Q659.6 531.9 693.4 538.8 A3.06 3.06 0 0 0 694.5 532.7 Q660.6 526.5 626.2 522.6 Z" fill="#55677f" opacity="0.8" filter="url(#bl1)"/><path d="M680.9 511.7 Q716.0 527.4 751.9 540.8 A3.06 3.06 0 0 0 754.0 535.1 Q717.9 522.2 680.9 511.7 Z" fill="#7396bd" opacity="0.95" filter="url(#bl0)"/><path d="M704.9 537.1 Q714.6 539.8 724.4 541.9 A0.87 0.87 0 0 0 724.7 540.1 Q714.9 538.3 704.9 537.1 Z" fill="#bfe6ff" opacity="1" filter="url(#bl0)"/><path d="M669.9 554.5 Q698.1 560.0 726.5 563.3 A2.62 2.62 0 0 0 727.0 558.1 Q698.6 555.3 669.9 554.5 Z" fill="#7396bd" opacity="0.9" filter="url(#bl0)"/><path d="M626.2 581.6 Q657.9 583.6 689.6 583.4 A2.62 2.62 0 0 0 689.6 578.1 Q657.9 578.8 626.2 581.6 Z" fill="#55677f" opacity="0.8" filter="url(#bl1)"/><path d="M633.7 608.3 Q666.3 605.7 698.6 601.3 A2.19 2.19 0 0 0 698.0 597.0 Q665.7 601.8 633.7 608.3 Z" fill="#7396bd" opacity="0.9" filter="url(#bl0)"/><path d="M677.4 597.4 Q698.2 596.2 719.0 594.1 A1.09 1.09 0 0 0 718.8 591.9 Q698.0 594.2 677.4 597.4 Z" fill="#bfe6ff" opacity="1" filter="url(#bl0)"/><path d="M931.7 444.8 Q920.5 455.7 910.5 467.6 A1.97 1.97 0 0 0 913.6 470.1 Q923.3 458.0 931.7 444.8 Z" fill="#bfe6ff" opacity="0.9" filter="url(#bl0)"/><path d="M945.7 453.6 Q928.0 472.5 911.7 492.4 A2.19 2.19 0 0 0 915.1 495.2 Q931.1 474.9 945.7 453.6 Z" fill="#bfe6ff" opacity="0.9" filter="url(#bl0)"/><path d="M1006.5 527.0 Q981.1 532.2 956.3 539.4 A2.62 2.62 0 0 0 957.8 544.4 Q982.5 536.7 1006.5 527.0 Z" fill="#bfe6ff" opacity="0.9" filter="url(#bl0)"/><path d="M1014.8 534.0 Q993.1 537.2 972.1 542.6 A2.84 2.84 0 0 0 973.6 548.1 Q994.5 542.2 1014.8 534.0 Z" fill="#7396bd" opacity="0.9" filter="url(#bl0)"/><path d="M1074.7 542.3 Q1038.7 544.4 1003.0 548.9 A3.06 3.06 0 0 0 1003.8 555.0 Q1039.4 549.8 1074.7 542.3 Z" fill="#55677f" opacity="0.8" filter="url(#bl1)"/><path d="M1037.1 411.2 Q1010.8 422.4 985.6 435.5 A2.62 2.62 0 0 0 988.0 440.2 Q1013.0 426.6 1037.1 411.2 Z" fill="#55677f" opacity="0.7" filter="url(#bl1)"/><path d="M1085.1 614.4 Q1053.9 606.6 1022.2 600.9 A2.62 2.62 0 0 0 1021.3 606.1 Q1053.1 611.3 1085.1 614.4 Z" fill="#7396bd" opacity="0.8" filter="url(#bl0)"/><path d="M1058.9 634.1 Q1024.8 620.5 989.9 609.3 A3.06 3.06 0 0 0 988.1 615.2 Q1023.1 625.8 1058.9 634.1 Z" fill="#7396bd" opacity="0.9" filter="url(#bl0)"/><path d="M1024.0 640.6 Q1007.0 632.6 989.6 625.9 A1.75 1.75 0 0 0 988.4 629.2 Q1005.9 635.6 1024.0 640.6 Z" fill="#bfe6ff" opacity="0.9" filter="url(#bl0)"/><path d="M1080.8 651.6 Q1046.6 636.7 1011.7 623.8 A2.62 2.62 0 0 0 1009.9 628.7 Q1045.0 641.1 1080.8 651.6 Z" fill="#55677f" opacity="0.8" filter="url(#bl1)"/><path d="M757.3 669.1 Q769.3 661.1 780.3 652.0 A1.75 1.75 0 0 0 778.1 649.4 Q767.3 658.7 757.3 669.1 Z" fill="#bfe6ff" opacity="0.9" filter="url(#bl0)"/><path d="M783.6 680.0 Q792.2 669.7 799.9 658.9 A1.31 1.31 0 0 0 797.8 657.4 Q790.2 668.4 783.6 680.0 Z" fill="#bfe6ff" opacity="0.9" filter="url(#bl0)"/><path d="M801.0 695.3 Q810.8 679.6 819.2 663.3 A1.75 1.75 0 0 0 816.1 661.7 Q807.9 678.2 801.0 695.3 Z" fill="#bfe6ff" opacity="0.9" filter="url(#bl0)"/><path d="M805.4 745.5 Q814.2 727.3 821.0 708.4 A2.62 2.62 0 0 0 816.1 706.7 Q809.7 725.8 805.4 745.5 Z" fill="#7396bd" opacity="0.9" filter="url(#bl0)"/><path d="M829.5 725.9 Q834.3 704.7 837.7 683.3 A1.75 1.75 0 0 0 834.3 682.8 Q831.2 704.2 829.5 725.9 Z" fill="#bfe6ff" opacity="0.9" filter="url(#bl0)"/><path d="M877.5 763.0 Q874.8 732.7 870.1 702.7 A2.62 2.62 0 0 0 864.9 703.6 Q870.2 733.5 877.5 763.0 Z" fill="#7396bd" opacity="0.9" filter="url(#bl0)"/><path d="M871.0 695.3 Q869.5 683.0 867.0 671.0 A1.31 1.31 0 0 0 864.5 671.5 Q867.2 683.5 871.0 695.3 Z" fill="#bfe6ff" opacity="0.9" filter="url(#bl0)"/><path d="M910.3 721.5 Q905.2 703.9 898.8 686.8 A1.75 1.75 0 0 0 895.6 688.0 Q902.3 705.0 910.3 721.5 Z" fill="#bfe6ff" opacity="0.9" filter="url(#bl0)"/><path d="M940.9 756.5 Q925.6 722.4 908.8 689.0 A2.19 2.19 0 0 0 904.9 691.0 Q922.1 724.1 940.9 756.5 Z" fill="#bfe6ff" opacity="0.95" filter="url(#bl0)"/><path d="M947.5 734.6 Q937.6 713.9 926.2 694.2 A2.19 2.19 0 0 0 922.4 696.4 Q934.2 715.9 947.5 734.6 Z" fill="#7396bd" opacity="0.8" filter="url(#bl0)"/><path d="M1015.2 717.1 Q997.4 700.0 978.4 684.5 A2.62 2.62 0 0 0 975.1 688.6 Q994.5 703.7 1015.2 717.1 Z" fill="#55677f" opacity="0.8" filter="url(#bl1)"/><path d="M989.0 732.4 Q977.4 714.8 964.5 698.3 A2.19 2.19 0 0 0 961.1 701.0 Q974.3 717.3 989.0 732.4 Z" fill="#55677f" opacity="0.8" filter="url(#bl1)"/><path d="M726.7 734.6 Q746.1 713.8 763.8 691.7 A2.62 2.62 0 0 0 759.6 688.4 Q742.4 710.9 726.7 734.6 Z" fill="#7396bd" opacity="0.9" filter="url(#bl0)"/><path d="M744.2 754.3 Q761.5 733.1 777.0 710.7 A2.62 2.62 0 0 0 772.7 707.8 Q757.6 730.4 744.2 754.3 Z" fill="#7396bd" opacity="0.85" filter="url(#bl0)"/><path d="M763.5 713.2 Q770.0 703.6 775.8 693.6 A1.09 1.09 0 0 0 773.9 692.6 Q768.3 702.7 763.5 713.2 Z" fill="#bfe6ff" opacity="0.9" filter="url(#bl0)"/><path d="M777.4 708.4 Q785.1 696.4 792.0 684.0 A1.09 1.09 0 0 0 790.0 683.0 Q783.4 695.5 777.4 708.4 Z" fill="#bfe6ff" opacity="0.9" filter="url(#bl0)"/><path d="M643.7 695.3 Q674.7 682.8 704.3 667.8 A3.50 3.50 0 0 0 701.1 661.6 Q671.8 677.2 643.7 695.3 Z" fill="#55677f" opacity="0.6" filter="url(#bl2)"/><path d="M759.5 787.1 Q776.0 753.3 789.4 718.5 A3.93 3.93 0 0 0 782.1 715.8 Q769.3 750.9 759.5 787.1 Z" fill="#55677f" opacity="0.6" filter="url(#bl2)"/><polygon points="680.6,443.5 714.5,428.3 778.0,429.2 778.9,507.8 737.7,507.8 708.3,521.2 691.3,522.0" fill="#2f9a9a"/><polygon points="680.6,446.0 683.5,446.0 695.5,520.0 737.7,505.0 737.7,507.8 708.3,521.2 691.3,522.0" fill="#a02a2a"/><polygon points="682.8,448.0 714.5,431.0 776.5,431.0 777.0,505.5 737.7,505.5 708.0,519.0 694.5,519.5" fill="#4a93d6"/><polygon points="691.3,452.4 726.1,434.5 737.7,503.3 702.9,521.2" fill="#ffffff"/><polygon points="727.0,437.2 768.1,439.0 775.3,506.9 737.7,503.3" fill="#e2e2e2"/><polygon points="954.2,455.5 961.2,447.8 1007.0,462.4 1030.7,437.4 1056.4,440.9 1064.8,509.0 1023.0,534.7 1013.3,535.4 954.2,522.9" fill="#2d8f8f"/><polygon points="954.2,458.0 954.2,522.9 1013.3,535.4 1023.0,534.7 1064.8,509.0 1062.0,500.0" fill="#6f9a2e"/><polygon points="961.2,447.8 1007.0,462.4 1005.0,468.0 958.0,455.0" fill="#a52a4a"/><polygon points="961.0,454.0 1007.0,466.0 1039.0,438.0 1043.0,446.0 1007.8,472.2 956.0,460.0" fill="#ffffff"/><polygon points="954.2,461.0 1007.8,472.2 1050.9,442.3 1064.8,503.4 1013.3,534.7 957.7,523.6" fill="#e26330"/><polygon points="1014.7,471.5 1044.6,460.3 1047.4,475.6 1015.4,491.6" fill="#ffffff"/><path d="M957 493 L988 470" stroke="#fff" stroke-width="2.2" stroke-linecap="round" opacity="0.95"/><path d="M965 510 L995 495" stroke="#fff" stroke-width="2.2" stroke-linecap="round" opacity="0.95"/><polygon points="690.0,622.0 727.0,607.0 733.0,570.0 838.0,569.0 829.0,624.0 822.0,646.0 784.6,649.0 727.3,654.0 690.0,634.0" fill="#a02a2a"/><polygon points="733.0,570.0 838.0,569.0 829.0,624.0 822.0,646.0 819.0,645.0 826.0,624.0 835.0,572.0 735.0,573.0" fill="#6a34b8"/><polygon points="690.0,628.0 727.3,654.0 750.0,652.0 700.0,626.0" fill="#6f9a2e"/><polygon points="691.8,624.3 729.0,609.0 735.7,572.5 835.5,571.5 827.5,624.3 820.8,644.5 784.6,647.0 727.3,652.1 691.8,632.7" fill="#c5ccd3"/><polygon points="691.8,629.5 727.3,649.0 820.8,642.5 820.8,644.5 784.6,647.0 727.3,652.1 691.8,632.7" fill="#9ba3ab"/><polygon points="708.7,628.5 729.0,620.0 729.8,640.3" fill="#4a4f55"/><polygon points="776.0,600.0 795.0,598.0 793.0,617.0 775.0,617.0" fill="#e6f0f6"/><path d="M693 628 L747 606" stroke="#fff" stroke-width="2.6" stroke-linecap="round"/><clipPath id="bclip"><path d="M842.7 479.7 C851.8 478.6 858.3 478.2 866.7 479.7 C875.1 481.1 883.9 482.9 893.0 488.4 C902.1 493.8 913.3 503.3 921.3 512.4 C929.3 521.5 936.8 533.5 941.0 543.0 C945.2 552.5 947.2 559.4 946.5 569.2 C945.8 579.0 943.4 589.6 936.6 602.0 C929.9 614.4 915.1 633.7 906.0 643.5 C896.9 653.3 890.7 657.2 882.0 661.0 C873.3 664.8 864.5 666.5 853.6 666.5 C842.7 666.5 827.4 664.8 816.5 661.0 C805.6 657.2 796.4 651.5 788.0 643.5 C779.6 635.5 770.9 623.2 766.2 613.0 C761.5 602.8 760.4 593.2 759.7 582.3 C759.0 571.4 759.2 559.4 761.8 547.4 C764.3 535.4 766.6 520.5 775.0 510.3 C783.4 500.1 800.8 491.3 812.1 486.2 C823.4 481.1 833.6 480.8 842.7 479.7Z"/></clipPath><filter id="bg10" x="-50%" y="-50%" width="200%" height="200%"><feGaussianBlur stdDeviation="9"/></filter><filter id="bg3" x="-50%" y="-50%" width="200%" height="200%"><feGaussianBlur stdDeviation="2.5"/></filter><g clip-path="url(#bclip)"><path d="M842.7 479.7 C851.8 478.6 858.3 478.2 866.7 479.7 C875.1 481.1 883.9 482.9 893.0 488.4 C902.1 493.8 913.3 503.3 921.3 512.4 C929.3 521.5 936.8 533.5 941.0 543.0 C945.2 552.5 947.2 559.4 946.5 569.2 C945.8 579.0 943.4 589.6 936.6 602.0 C929.9 614.4 915.1 633.7 906.0 643.5 C896.9 653.3 890.7 657.2 882.0 661.0 C873.3 664.8 864.5 666.5 853.6 666.5 C842.7 666.5 827.4 664.8 816.5 661.0 C805.6 657.2 796.4 651.5 788.0 643.5 C779.6 635.5 770.9 623.2 766.2 613.0 C761.5 602.8 760.4 593.2 759.7 582.3 C759.0 571.4 759.2 559.4 761.8 547.4 C764.3 535.4 766.6 520.5 775.0 510.3 C783.4 500.1 800.8 491.3 812.1 486.2 C823.4 481.1 833.6 480.8 842.7 479.7Z" fill="#3b4560" opacity="0.3"/><path d="M842.7 479.7 C851.8 478.6 858.3 478.2 866.7 479.7 C875.1 481.1 883.9 482.9 893.0 488.4 C902.1 493.8 913.3 503.3 921.3 512.4 C929.3 521.5 936.8 533.5 941.0 543.0 C945.2 552.5 947.2 559.4 946.5 569.2 C945.8 579.0 943.4 589.6 936.6 602.0 C929.9 614.4 915.1 633.7 906.0 643.5 C896.9 653.3 890.7 657.2 882.0 661.0 C873.3 664.8 864.5 666.5 853.6 666.5 C842.7 666.5 827.4 664.8 816.5 661.0 C805.6 657.2 796.4 651.5 788.0 643.5 C779.6 635.5 770.9 623.2 766.2 613.0 C761.5 602.8 760.4 593.2 759.7 582.3 C759.0 571.4 759.2 559.4 761.8 547.4 C764.3 535.4 766.6 520.5 775.0 510.3 C783.4 500.1 800.8 491.3 812.1 486.2 C823.4 481.1 833.6 480.8 842.7 479.7Z" fill="none" stroke="#3f6fd0" stroke-width="46" opacity="0.75" filter="url(#bg10)"/><path d="M842.7 479.7 C851.8 478.6 858.3 478.2 866.7 479.7 C875.1 481.1 883.9 482.9 893.0 488.4 C902.1 493.8 913.3 503.3 921.3 512.4 C929.3 521.5 936.8 533.5 941.0 543.0 C945.2 552.5 947.2 559.4 946.5 569.2 C945.8 579.0 943.4 589.6 936.6 602.0 C929.9 614.4 915.1 633.7 906.0 643.5 C896.9 653.3 890.7 657.2 882.0 661.0 C873.3 664.8 864.5 666.5 853.6 666.5 C842.7 666.5 827.4 664.8 816.5 661.0 C805.6 657.2 796.4 651.5 788.0 643.5 C779.6 635.5 770.9 623.2 766.2 613.0 C761.5 602.8 760.4 593.2 759.7 582.3 C759.0 571.4 759.2 559.4 761.8 547.4 C764.3 535.4 766.6 520.5 775.0 510.3 C783.4 500.1 800.8 491.3 812.1 486.2 C823.4 481.1 833.6 480.8 842.7 479.7Z" fill="none" stroke="#3d9cff" stroke-width="14" opacity="1" filter="url(#bg3)"/><path d="M842.7 479.7 C851.8 478.6 858.3 478.2 866.7 479.7 C875.1 481.1 883.9 482.9 893.0 488.4 C902.1 493.8 913.3 503.3 921.3 512.4 C929.3 521.5 936.8 533.5 941.0 543.0 C945.2 552.5 947.2 559.4 946.5 569.2 C945.8 579.0 943.4 589.6 936.6 602.0 C929.9 614.4 915.1 633.7 906.0 643.5 C896.9 653.3 890.7 657.2 882.0 661.0 C873.3 664.8 864.5 666.5 853.6 666.5 C842.7 666.5 827.4 664.8 816.5 661.0 C805.6 657.2 796.4 651.5 788.0 643.5 C779.6 635.5 770.9 623.2 766.2 613.0 C761.5 602.8 760.4 593.2 759.7 582.3 C759.0 571.4 759.2 559.4 761.8 547.4 C764.3 535.4 766.6 520.5 775.0 510.3 C783.4 500.1 800.8 491.3 812.1 486.2 C823.4 481.1 833.6 480.8 842.7 479.7Z" fill="none" stroke="#7ee4ff" stroke-width="4" filter="url(#bl1)"/></g><polygon clip-path="url(#bclip)" points="691.8,624.3 729.0,609.0 735.7,572.5 835.5,571.5 827.5,624.3 820.8,644.5 784.6,647.0 727.3,652.1 691.8,632.7" fill="#d9f4ff" opacity="0.72"/><polygon points="906.2,605.7 969.5,597.3 982.1,698.5 923.0,702.7 914.6,695.1" fill="#6a34b8"/><polygon points="906.2,605.7 969.5,597.3 968.0,603.0 912.0,615.0 916.0,690.0" fill="#6f9a2e"/><polygon points="920.0,694.0 980.4,684.0 981.0,696.0 924.0,703.0" fill="#ffffff"/><polygon points="907.0,606.5 967.0,599.0 980.4,686.7 925.6,696.8" fill="#ffcc00"/><polygon points="907.0,606.5 913.0,606.0 929.0,696.0 924.0,697.0" fill="#ffffff"/><polygon points="921.4,629.3 953.4,619.2 956.8,631.0 923.9,639.5" fill="#ffffff"/><path d="M963 667 L976 680" stroke="#ffe680" stroke-width="5" stroke-linecap="round" opacity="0.8" filter="url(#bl1)"/><clipPath id="yclip"><polygon points="906.2,605.7 969.5,597.3 982.1,698.5 923,702.7 914.6,695.1"/></clipPath><path clip-path="url(#yclip)" d="M842.7 479.7 C851.8 478.6 858.3 478.2 866.7 479.7 C875.1 481.1 883.9 482.9 893.0 488.4 C902.1 493.8 913.3 503.3 921.3 512.4 C929.3 521.5 936.8 533.5 941.0 543.0 C945.2 552.5 947.2 559.4 946.5 569.2 C945.8 579.0 943.4 589.6 936.6 602.0 C929.9 614.4 915.1 633.7 906.0 643.5 C896.9 653.3 890.7 657.2 882.0 661.0 C873.3 664.8 864.5 666.5 853.6 666.5 C842.7 666.5 827.4 664.8 816.5 661.0 C805.6 657.2 796.4 651.5 788.0 643.5 C779.6 635.5 770.9 623.2 766.2 613.0 C761.5 602.8 760.4 593.2 759.7 582.3 C759.0 571.4 759.2 559.4 761.8 547.4 C764.3 535.4 766.6 520.5 775.0 510.3 C783.4 500.1 800.8 491.3 812.1 486.2 C823.4 481.1 833.6 480.8 842.7 479.7Z" fill="none" stroke="#fff6b0" stroke-width="10" opacity="0.75" filter="url(#bg3)"/><polygon points="845.0,445.7 861.7,439.5 911.8,445.7 911.1,497.9 906.9,541.0 839.5,536.8" fill="#6a34b8"/><polygon points="861.7,439.5 911.8,445.7 911.1,497.9 905.0,497.0" fill="#a22c2c"/><polygon points="849.9,446.4 911.1,449.9 902.0,541.0 840.2,532.0" fill="#ffffff"/><polygon points="875.6,438.8 889.5,438.8 889.0,447.0 875.0,447.0" fill="#e8e8e8"/><polygon points="862.4,443.6 902.0,446.5 901.0,452.7 861.5,450.0" fill="#e4e4e4"/><polygon points="859.5,460.0 898.6,463.5 898.0,473.0 858.5,469.5" fill="#e2e2e2"/><polygon points="855.0,497.0 895.0,501.0 894.5,511.0 854.0,507.0" fill="#dce8f4"/><polygon points="851.0,517.0 893.5,521.0 893.0,530.0 850.5,526.0" fill="#e2e2e2"/><path d="M775 575 C772 600 780 625 800 645" fill="none" stroke="#c8f6ff" stroke-width="6" opacity="0.5" filter="url(#bg3)"/><path d="M940 545 C946 580 935 615 910 640" fill="none" stroke="#9af0ff" stroke-width="5" opacity="0.6" filter="url(#bg3)"/><path d="M715.8 387.2 Q744.5 434.4 774.8 480.4 A2.62 2.62 0 0 0 779.2 477.5 Q748.4 431.7 715.8 387.2 Z" fill="#bfe6ff" opacity="0.85" filter="url(#bl0)"/><path d="M923.4 522.2 Q912.2 527.9 901.4 534.4 A1.09 1.09 0 0 0 902.6 536.2 Q913.2 529.6 923.4 522.2 Z" fill="#bfe6ff" opacity="0.95" filter="url(#bl0)"/><path d="M881.0 603.1 Q874.9 596.4 868.4 590.3 A0.76 0.76 0 0 0 867.4 591.4 Q874.0 597.4 881.0 603.1 Z" fill="#bfe6ff" opacity="0.95" filter="url(#bl0)"/><path d="M932.2 582.5 Q922.4 580.5 912.6 579.1 A0.76 0.76 0 0 0 912.4 580.7 Q922.2 581.9 932.2 582.5 Z" fill="#bfe6ff" opacity="0.95" filter="url(#bl0)"/><g stroke="#8d8d8d" stroke-width="1" fill="none" opacity="0.9"><circle cx="723.5" cy="469.5" r="2.6"/><rect x="722.3" y="462.5" width="2.4" height="3.5"/><rect x="722.3" y="473.0" width="2.4" height="3.5"/><rect x="716.5" y="468.3" width="3.5" height="2.4"/><rect x="727.0" y="468.3" width="3.5" height="2.4"/></g><g stroke="#8d8d8d" stroke-width="1" fill="none" opacity="0.9"><circle cx="877.5" cy="483.5" r="2.6"/><rect x="876.3" y="476.5" width="2.4" height="3.5"/><rect x="876.3" y="487.0" width="2.4" height="3.5"/><rect x="870.5" y="482.3" width="3.5" height="2.4"/><rect x="881.0" y="482.3" width="3.5" height="2.4"/></g><g stroke="#8d8d8d" stroke-width="1" fill="none" opacity="0.9"><circle cx="1017.5" cy="481.5" r="2.6"/><rect x="1016.3" y="474.5" width="2.4" height="3.5"/><rect x="1016.3" y="485.0" width="2.4" height="3.5"/><rect x="1010.5" y="480.3" width="3.5" height="2.4"/><rect x="1021.0" y="480.3" width="3.5" height="2.4"/></g><g stroke="#8d8d8d" stroke-width="1" fill="none" opacity="0.9"><circle cx="758.5" cy="614" r="2.6"/><rect x="757.3" y="607" width="2.4" height="3.5"/><rect x="757.3" y="617.5" width="2.4" height="3.5"/><rect x="751.5" y="612.8" width="3.5" height="2.4"/><rect x="762.0" y="612.8" width="3.5" height="2.4"/></g><g stroke="#8d8d8d" stroke-width="1" fill="none" opacity="0.9"><circle cx="950" cy="656" r="2.6"/><rect x="948.8" y="649" width="2.4" height="3.5"/><rect x="948.8" y="659.5" width="2.4" height="3.5"/><rect x="943" y="654.8" width="3.5" height="2.4"/><rect x="953.5" y="654.8" width="3.5" height="2.4"/></g><g stroke="#8d8d8d" stroke-width="1" fill="none" opacity="0.9"><circle cx="1364" cy="178" r="2.6"/><rect x="1362.8" y="171" width="2.4" height="3.5"/><rect x="1362.8" y="181.5" width="2.4" height="3.5"/><rect x="1357" y="176.8" width="3.5" height="2.4"/><rect x="1367.5" y="176.8" width="3.5" height="2.4"/></g></svg>
<div style="position:absolute;left:286px;top:113px;width:1163px;height:2px;background:rgba(66,150,230,0.62);border-radius:0px;"></div>
<div style="position:absolute;left:286px;top:952px;width:1163px;height:2px;background:rgba(120,190,250,0.78);border-radius:0px;"></div>
<div style="position:absolute;left:286px;top:115px;width:2px;height:837px;background:rgba(66,150,230,0.62);border-radius:0px;"></div>
<div style="position:absolute;left:1447px;top:115px;width:2px;height:837px;background:rgba(120,190,250,0.78);border-radius:0px;"></div>
<div style="position:absolute;left:286px;top:958px;width:1163px;height:40.5px;background:#212226;border-radius:3px;"></div>
<div style="position:absolute;left:296.8px;top:972.33px;font-size:14px;line-height:15.64px;font-weight:400;color:#d4d4d6;letter-spacing:0.716px;white-space:pre;">Output</div>
<div style="position:absolute;left:358.7px;top:972.33px;font-size:14px;line-height:15.64px;font-weight:400;color:#d4d4d6;letter-spacing:0.649px;white-space:pre;">Debugger</div>
<div style="position:absolute;left:441.6px;top:972.33px;font-size:14px;line-height:15.64px;font-weight:400;color:#d4d4d6;letter-spacing:0.531px;white-space:pre;">Audio</div>
<div style="position:absolute;left:496.3px;top:972.33px;font-size:14px;line-height:15.64px;font-weight:400;color:#d4d4d6;letter-spacing:0.718px;white-space:pre;">Animation</div>
<div style="position:absolute;left:580.5px;top:972.33px;font-size:14px;line-height:15.64px;font-weight:400;color:#d4d4d6;letter-spacing:0.338px;white-space:pre;">Shader Editor</div>
<svg style="position:absolute;left:1340px;top:971px;" width="14" height="15" viewBox="0 0 14 15"><path d="M7.5 1.5a1.3 1.3 0 0 1 1.8 1.2a4.5 4.5 0 0 1 3.2 5.3l-0.6 3.2l1.4 1.6l-0.4 0.9l-10.5-2.2l0.2-1l1.9-1l0.6-3.2a4.5 4.5 0 0 1 2.4-3.8zM5 12.6l3.6 0.8a1.9 1.9 0 0 1-3.6-0.8z" fill="#4d4d52"/></svg>
<div style="position:absolute;left:1364.8px;top:972.33px;font-size:14px;line-height:15.64px;font-weight:400;color:#8b8b8f;letter-spacing:0.229px;white-space:pre;">4.5.1.stable</div>
<div style="position:absolute;left:1453px;top:46px;width:459px;height:952.5px;background:#212226;border-radius:3px;"></div>
<div style="position:absolute;left:1538px;top:46px;width:374px;height:28px;background:#17181c;border-radius:0px;border-radius:0 3px 0 0;"></div>
<div style="position:absolute;left:1453px;top:46px;width:85px;height:2px;background:#3d8fd9;border-radius:0px;"></div>
<div style="position:absolute;left:1463.75px;top:53.33px;font-size:14px;line-height:15.64px;font-weight:400;color:#d4d4d6;letter-spacing:0.584px;white-space:pre;">Inspector</div>
<div style="position:absolute;left:1549px;top:53.33px;font-size:14px;line-height:15.64px;font-weight:400;color:#8b8b8f;letter-spacing:0.450px;white-space:pre;">Node</div>
<div style="position:absolute;left:1607px;top:53.33px;font-size:14px;line-height:15.64px;font-weight:400;color:#8b8b8f;letter-spacing:0.537px;white-space:pre;">History</div>
<svg style="position:absolute;left:1901px;top:51px;" width="6" height="18" viewBox="0 0 6 18"><circle cx="3" cy="3" r="2.1" fill="#777"/><circle cx="3" cy="9" r="2.1" fill="#777"/><circle cx="3" cy="15" r="2.1" fill="#777"/></svg>
<svg style="position:absolute;left:1464px;top:85px;" width="16" height="16" viewBox="0 0 16 16"><path d="M1 0.6H8.2V5.2H13.4V9.2H10V11.3H8V15.2H1z" fill="#e0e0e0"/><path d="M9.3 0.6L13.4 4.2H9.3z" fill="#e0e0e0"/><path d="M11 9.4v6.2M7.9 12.5h6.2" stroke="#5fe070" stroke-width="2.3"/></svg>
<svg style="position:absolute;left:1495px;top:86px;" width="16" height="15" viewBox="0 0 16 15"><path d="M1.5 13.2V2.6A1.3 1.3 0 0 1 2.8 1.3H5.6L7 2.8H10.8" fill="none" stroke="#e0e0e0" stroke-width="1.3"/><path d="M4.6 5.2H14.4L13.3 14H2.3A0.8 0.8 0 0 1 1.6 13.2z" fill="#e0e0e0"/></svg>
<svg style="position:absolute;left:1527px;top:85px;" width="16" height="16" viewBox="0 0 16 16"><path d="M1 2.2A1.2 1.2 0 0 1 2.2 1H11.2L15 4.8V14A1.2 1.2 0 0 1 13.8 15.2H2.2A1.2 1.2 0 0 1 1 14z" fill="#707070"/><rect x="3.2" y="1" width="7" height="4.3" fill="#212226"/><rect x="4.3" y="1" width="2.6" height="3.4" fill="#707070"/><circle cx="8.1" cy="10.6" r="1.9" fill="#212226"/></svg>
<svg style="position:absolute;left:1564px;top:84px;" width="6" height="18" viewBox="0 0 6 18"><circle cx="3" cy="3" r="2.1" fill="#e6e6e6"/><circle cx="3" cy="9" r="2.1" fill="#e6e6e6"/><circle cx="3" cy="15" r="2.1" fill="#e6e6e6"/></svg>
<svg style="position:absolute;left:1836px;top:85px;" width="10" height="16" viewBox="0 0 10 16"><path d="M8 1L2 8l6 7" fill="none" stroke="#777" stroke-width="1.6"/></svg>
<svg style="position:absolute;left:1860px;top:85px;" width="10" height="16" viewBox="0 0 10 16"><path d="M2 1l6 7-6 7" fill="none" stroke="#777" stroke-width="1.6"/></svg>
<svg style="position:absolute;left:1886px;top:85px;" width="16" height="16" viewBox="0 0 16 16"><path d="M3 9A5.5 5.5 0 1 0 4.5 4" fill="none" stroke="#e0e0e0" stroke-width="2"/><path d="M0.5 8l3 3.5 3-3.5z" fill="#e0e0e0"/><path d="M9 4.5v4h3" fill="none" stroke="#e0e0e0" stroke-width="1.8"/></svg>
<div style="position:absolute;left:1457px;top:110.5px;width:419px;height:30px;background:#17181b;border-radius:3px;"></div>
<svg style="position:absolute;left:1462px;top:118px;" width="14" height="14" viewBox="0 0 14 14"><circle cx="7" cy="7" r="5" fill="none" stroke="#8da5f3" stroke-width="2"/></svg>
<div style="position:absolute;left:1485px;top:118.33px;font-size:14px;line-height:15.64px;font-weight:400;color:#d4d4d6;letter-spacing:-0.107px;white-space:pre;">Level</div>
<svg style="position:absolute;left:1857px;top:120px;" width="14" height="10" viewBox="0 0 14 10"><path d="M2 2l5 5 5-5" fill="none" stroke="#e0e0e0" stroke-width="2"/></svg>
<svg style="position:absolute;left:1884px;top:113px;" width="19" height="21" viewBox="0 0 19 21"><circle cx="10.5" cy="7.3" r="3.2" fill="none" stroke="#e0e0e0" stroke-width="1.8"/><path d="M8.2 9.6L5.6 12.2" stroke="#e0e0e0" stroke-width="1.9" stroke-linecap="round"/><text x="1.5" y="19.6" font-size="8.6" font-weight="700" fill="#e0e0e0" font-family="Liberation Sans" textLength="16" lengthAdjust="spacingAndGlyphs">DOC</text></svg>
<div style="position:absolute;left:1457px;top:145px;width:419px;height:31px;background:#17181b;border-radius:3px;"></div>
<div style="position:absolute;left:1463px;top:153.33px;font-size:14px;line-height:15.64px;font-weight:400;color:#8b8b8f;letter-spacing:0.316px;white-space:pre;">Filter Properties</div>
<svg style="position:absolute;left:1855px;top:153px;" width="15" height="15" viewBox="0 0 15 15"><circle cx="5.7" cy="5.7" r="4.2" fill="none" stroke="#dedede" stroke-width="1.8"/><path d="M8.8 8.8L13 13" stroke="#dedede" stroke-width="2.1" stroke-linecap="round"/></svg>
<svg style="position:absolute;left:1886px;top:152px;" width="16" height="16" viewBox="0 0 16 16"><path d="M4 1v6" stroke="#e0e0e0" stroke-width="1.6"/><path d="M2 8h4v6a2 2 0 0 1-4 0z" fill="#e0e0e0"/><path d="M12 7v8" stroke="#e0e0e0" stroke-width="2"/><path d="M9.5 1v3a2.5 2.5 0 0 0 5 0V1" fill="none" stroke="#e0e0e0" stroke-width="1.8"/></svg>
<div style="position:absolute;left:1457px;top:180px;width:451px;height:814.7px;background:#141518;border-radius:3px;"></div>
<div style="position:absolute;left:1463px;top:185px;width:439px;height:25px;background:#333438;border-radius:3px;"></div>
<svg style="position:absolute;left:1644px;top:191px;" width="14" height="14" viewBox="0 0 14 14"><circle cx="7" cy="7" r="5" fill="none" stroke="#8da5f3" stroke-width="2"/></svg>
<div style="position:absolute;left:1665.5px;top:189.33px;font-size:14px;line-height:15.64px;font-weight:700;color:#d8d8da;letter-spacing:0.295px;white-space:pre;">Node2D</div>
<div style="position:absolute;left:1463px;top:210px;width:439px;height:25px;background:#1c1d21;border-radius:0px;"></div>
<svg style="position:absolute;left:1466px;top:218px;" width="10" height="8" viewBox="0 0 10 8"><path d="M1 2l4 4 4-4" fill="none" stroke="#8a8a8a" stroke-width="1.8"/></svg>
<div style="position:absolute;left:1479.5px;top:214.33px;font-size:14px;line-height:15.64px;font-weight:700;color:#d8d8da;letter-spacing:0.301px;white-space:pre;">Transform</div>
<div style="position:absolute;left:1483px;top:242.33px;font-size:14px;line-height:15.64px;font-weight:400;color:#c8c8ca;letter-spacing:0.390px;white-space:pre;">Position</div>
<div style="position:absolute;left:1689.2px;top:235.5px;width:212.4px;height:30px;background:#17181b;border-radius:3px;"></div>
<div style="position:absolute;left:1689.2px;top:235.5px;width:19.5px;height:30px;background:#0f1012;border-radius:3px;"></div>
<div style="position:absolute;left:1694.8px;top:242.33px;font-size:14px;line-height:15.64px;font-weight:400;color:#c7774f;letter-spacing:0.000px;white-space:pre;">x</div>
<div style="position:absolute;left:1713px;top:242.33px;font-size:14px;line-height:15.64px;font-weight:400;color:#e0e0e0;letter-spacing:-0.195px;white-space:pre;">0.0</div>
<div style="position:absolute;left:1739.6px;top:242.33px;font-size:14px;line-height:15.64px;font-weight:400;color:#77777a;letter-spacing:-0.283px;white-space:pre;">px</div>
<div style="position:absolute;left:1689.2px;top:270.5px;width:212.4px;height:30px;background:#17181b;border-radius:3px;"></div>
<div style="position:absolute;left:1689.2px;top:270.5px;width:19.5px;height:30px;background:#0f1012;border-radius:3px;"></div>
<div style="position:absolute;left:1694.8px;top:277.33px;font-size:14px;line-height:15.64px;font-weight:400;color:#5fae63;letter-spacing:0.000px;white-space:pre;">y</div>
<div style="position:absolute;left:1713px;top:277.33px;font-size:14px;line-height:15.64px;font-weight:400;color:#e0e0e0;letter-spacing:-0.195px;white-space:pre;">0.0</div>
<div style="position:absolute;left:1739.6px;top:277.33px;font-size:14px;line-height:15.64px;font-weight:400;color:#77777a;letter-spacing:-0.283px;white-space:pre;">px</div>
<div style="position:absolute;left:1483px;top:312.53px;font-size:14px;line-height:15.64px;font-weight:400;color:#c8c8ca;letter-spacing:0.114px;white-space:pre;">Rotation</div>
<div style="position:absolute;left:1689.2px;top:305px;width:212.4px;height:31px;background:#17181b;border-radius:3px;"></div>
<div style="position:absolute;left:1705px;top:312.53px;font-size:14px;line-height:15.64px;font-weight:400;color:#e0e0e0;letter-spacing:-0.195px;white-space:pre;">0.0</div>
<div style="position:absolute;left:1727px;top:312.95px;font-size:10px;line-height:11.17px;font-weight:400;color:#9a9a9a;letter-spacing:0.000px;white-space:pre;">°</div>
<div style="position:absolute;left:1695px;top:330.3px;width:197px;height:1.5px;background:#777;border-radius:0px;"></div>
<div style="position:absolute;left:1792.5px;top:328.8px;width:4.5px;height:4.5px;background:#cfcfcf;border-radius:0px;"></div>
<div style="position:absolute;left:1483px;top:347.33px;font-size:14px;line-height:15.64px;font-weight:400;color:#c8c8ca;letter-spacing:-0.348px;white-space:pre;">Scale</div>
<div style="position:absolute;left:1689.2px;top:340.6px;width:212.4px;height:30px;background:#17181b;border-radius:3px;"></div>
<div style="position:absolute;left:1689.2px;top:340.6px;width:19.5px;height:30px;background:#0f1012;border-radius:3px;"></div>
<div style="position:absolute;left:1694.8px;top:347.43px;font-size:14px;line-height:15.64px;font-weight:400;color:#c7774f;letter-spacing:0.000px;white-space:pre;">x</div>
<div style="position:absolute;left:1713px;top:347.43px;font-size:14px;line-height:15.64px;font-weight:400;color:#e0e0e0;letter-spacing:-0.195px;white-space:pre;">1.0</div>
<div style="position:absolute;left:1689.2px;top:375.6px;width:212.4px;height:30px;background:#17181b;border-radius:3px;"></div>
<div style="position:absolute;left:1689.2px;top:375.6px;width:19.5px;height:30px;background:#0f1012;border-radius:3px;"></div>
<div style="position:absolute;left:1694.8px;top:382.43px;font-size:14px;line-height:15.64px;font-weight:400;color:#5fae63;letter-spacing:0.000px;white-space:pre;">y</div>
<div style="position:absolute;left:1713px;top:382.43px;font-size:14px;line-height:15.64px;font-weight:400;color:#e0e0e0;letter-spacing:-0.195px;white-space:pre;">1.0</div>
<svg style="position:absolute;left:1878px;top:362px;" width="22" height="20" viewBox="0 0 22 20"><path d="M12.39 13.61A3.3 3.3 0 1 1 9.39 10.61M11.81 8.19A3.3 3.3 0 1 1 14.81 11.19" fill="none" stroke="#e6e6e6" stroke-width="2"/><path d="M9.6 13.4L14.6 8.4" stroke="#17181b" stroke-width="4.6" stroke-linecap="round"/><path d="M9.6 13.4L14.6 8.4" stroke="#e6e6e6" stroke-width="2.1" stroke-linecap="round"/></svg>
<div style="position:absolute;left:1483px;top:417.13px;font-size:14px;line-height:15.64px;font-weight:400;color:#c8c8ca;letter-spacing:-0.216px;white-space:pre;">Skew</div>
<div style="position:absolute;left:1689.2px;top:410px;width:212.4px;height:31px;background:#17181b;border-radius:3px;"></div>
<div style="position:absolute;left:1705px;top:417.13px;font-size:14px;line-height:15.64px;font-weight:400;color:#e0e0e0;letter-spacing:-0.195px;white-space:pre;">0.0</div>
<div style="position:absolute;left:1727px;top:417.55px;font-size:10px;line-height:11.17px;font-weight:400;color:#9a9a9a;letter-spacing:0.000px;white-space:pre;">°</div>
<div style="position:absolute;left:1695px;top:434.9px;width:197px;height:1.5px;background:#777;border-radius:0px;"></div>
<div style="position:absolute;left:1792.5px;top:433.4px;width:4.5px;height:4.5px;background:#cfcfcf;border-radius:0px;"></div>
<div style="position:absolute;left:1463px;top:441px;width:439px;height:24.5px;background:#333438;border-radius:3px;"></div>
<svg style="position:absolute;left:1630px;top:445px;" width="15" height="15" viewBox="0 0 15 15"><path d="M13.5 1.5L6 9" stroke="#bdbdbd" stroke-width="3"/><path d="M5 9.5l-2.5 2.5-1 2.5 2.5-1 2.5-2.5z" fill="#bdbdbd"/></svg>
<div style="position:absolute;left:1651px;top:445.33px;font-size:14px;line-height:15.64px;font-weight:700;color:#d8d8da;letter-spacing:0.469px;white-space:pre;">CanvasItem</div>
<div style="position:absolute;left:1463px;top:465.5px;width:439px;height:100.5px;background:#1c1d21;border-radius:0px;"></div>
<svg style="position:absolute;left:1467px;top:472.5px;" width="8" height="10" viewBox="0 0 8 10"><path d="M2 1l4 4-4 4" fill="none" stroke="#8a8a8a" stroke-width="1.8"/></svg>
<svg style="position:absolute;left:1467px;top:497.5px;" width="8" height="10" viewBox="0 0 8 10"><path d="M2 1l4 4-4 4" fill="none" stroke="#8a8a8a" stroke-width="1.8"/></svg>
<svg style="position:absolute;left:1467px;top:522.5px;" width="8" height="10" viewBox="0 0 8 10"><path d="M2 1l4 4-4 4" fill="none" stroke="#8a8a8a" stroke-width="1.8"/></svg>
<svg style="position:absolute;left:1467px;top:547.5px;" width="8" height="10" viewBox="0 0 8 10"><path d="M2 1l4 4-4 4" fill="none" stroke="#8a8a8a" stroke-width="1.8"/></svg>
<div style="position:absolute;left:1479.2px;top:470.53px;font-size:14px;line-height:15.64px;font-weight:700;color:#d8d8da;letter-spacing:0.263px;white-space:pre;">Visibility</div>
<div style="position:absolute;left:1479.2px;top:495.33px;font-size:14px;line-height:15.64px;font-weight:700;color:#d8d8da;letter-spacing:0.361px;white-space:pre;">Ordering</div>
<div style="position:absolute;left:1479.2px;top:520.33px;font-size:14px;line-height:15.64px;font-weight:700;color:#d8d8da;letter-spacing:0.430px;white-space:pre;">Texture</div>
<div style="position:absolute;left:1479.2px;top:545.33px;font-size:14px;line-height:15.64px;font-weight:700;color:#d8d8da;letter-spacing:0.727px;white-space:pre;">Material</div>
<div style="position:absolute;left:1463px;top:566.5px;width:439px;height:24px;background:#333438;border-radius:3px;"></div>
<svg style="position:absolute;left:1653px;top:571px;" width="14" height="14" viewBox="0 0 14 14"><circle cx="7" cy="7" r="5" fill="none" stroke="#e0e0e0" stroke-width="2"/></svg>
<div style="position:absolute;left:1674.3px;top:570.63px;font-size:14px;line-height:15.64px;font-weight:700;color:#d8d8da;letter-spacing:0.382px;white-space:pre;">Node</div>
<div style="position:absolute;left:1463px;top:590.5px;width:439px;height:100px;background:#1c1d21;border-radius:0px;"></div>
<svg style="position:absolute;left:1467px;top:597px;" width="8" height="10" viewBox="0 0 8 10"><path d="M2 1l4 4-4 4" fill="none" stroke="#8a8a8a" stroke-width="1.8"/></svg>
<div style="position:absolute;left:1479.2px;top:595.43px;font-size:14px;line-height:15.64px;font-weight:700;color:#d8d8da;letter-spacing:-0.341px;white-space:pre;">Process</div>
<svg style="position:absolute;left:1467px;top:622px;" width="8" height="10" viewBox="0 0 8 10"><path d="M2 1l4 4-4 4" fill="none" stroke="#8a8a8a" stroke-width="1.8"/></svg>
<div style="position:absolute;left:1479.2px;top:620.43px;font-size:14px;line-height:15.64px;font-weight:700;color:#d8d8da;letter-spacing:0.319px;white-space:pre;">Physics Interpolation</div>
<svg style="position:absolute;left:1467px;top:647px;" width="8" height="10" viewBox="0 0 8 10"><path d="M2 1l4 4-4 4" fill="none" stroke="#8a8a8a" stroke-width="1.8"/></svg>
<div style="position:absolute;left:1479.2px;top:645.43px;font-size:14px;line-height:15.64px;font-weight:700;color:#d8d8da;letter-spacing:0.340px;white-space:pre;">Auto Translate</div>
<svg style="position:absolute;left:1467px;top:672px;" width="8" height="10" viewBox="0 0 8 10"><path d="M2 1l4 4-4 4" fill="none" stroke="#8a8a8a" stroke-width="1.8"/></svg>
<div style="position:absolute;left:1479.2px;top:670.43px;font-size:14px;line-height:15.64px;font-weight:700;color:#d8d8da;letter-spacing:0.241px;white-space:pre;">Editor Description</div>
<div style="position:absolute;left:1471.3px;top:698.33px;font-size:14px;line-height:15.64px;font-weight:400;color:#c8c8ca;letter-spacing:0.167px;white-space:pre;">Script</div>
<div style="position:absolute;left:1736px;top:698.33px;font-size:14px;line-height:15.64px;font-weight:400;color:#d0d0d2;letter-spacing:0.393px;white-space:pre;">&lt;empty&gt;</div>
<div style="position:absolute;left:1848px;top:692px;width:54px;height:28.5px;background:#18191d;border-radius:3px;"></div>
<svg style="position:absolute;left:1854px;top:699px;" width="16" height="15" viewBox="0 0 16 15"><path d="M1.5 13.2V2.6A1.3 1.3 0 0 1 2.8 1.3H5.6L7 2.8H10.8" fill="none" stroke="#e0e0e0" stroke-width="1.3"/><path d="M4.6 5.2H14.4L13.3 14H2.3A0.8 0.8 0 0 1 1.6 13.2z" fill="#e0e0e0"/></svg>
<svg style="position:absolute;left:1884px;top:704px;" width="10" height="7" viewBox="0 0 10 7"><path d="M1 1l4 4 4-4" fill="none" stroke="#a8a8a8" stroke-width="1.8"/></svg>
<div style="position:absolute;left:1593px;top:726.3px;width:178.6px;height:30.2px;background:#222327;border-radius:3px;"></div>
<svg style="position:absolute;left:1600px;top:734px;" width="15" height="15" viewBox="0 0 15 15"><path d="M7.5 0v15M0 7.5h15" stroke="#e8e8e8" stroke-width="2"/></svg>
<div style="position:absolute;left:1647px;top:734.33px;font-size:14px;line-height:15.64px;font-weight:400;color:#d0d0d2;letter-spacing:0.424px;white-space:pre;">Add Metadata</div>
</div></body></html>
